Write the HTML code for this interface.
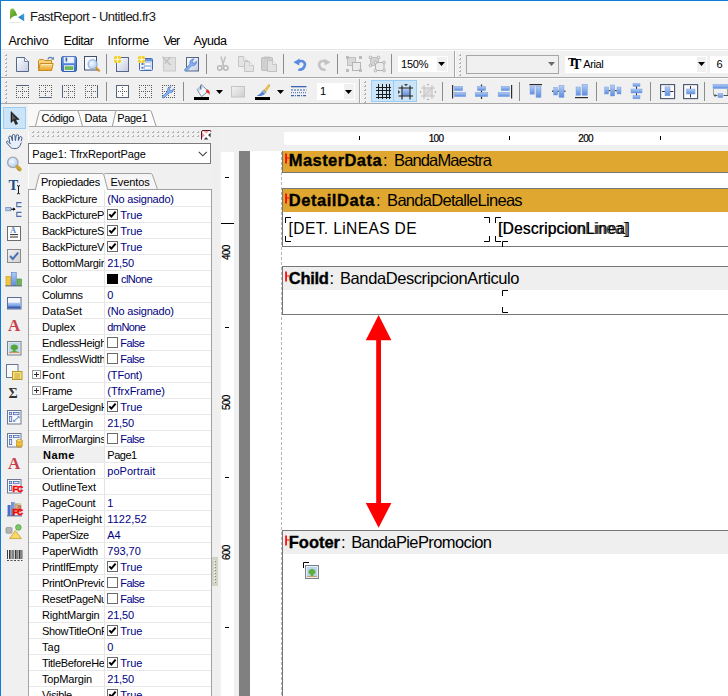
<!DOCTYPE html>
<html lang="es"><head><meta charset="utf-8"><title>FastReport - Untitled.fr3</title>
<style>
html,body{margin:0;padding:0}
body{width:728px;height:696px;overflow:hidden;position:relative;background:#fff;font-family:"Liberation Sans",sans-serif}
.a{position:absolute;box-sizing:border-box}
.t{position:absolute;white-space:pre}
svg{overflow:visible}
</style></head>
<body>
<div class="a" style="left:0px;top:0px;width:728px;height:1px;background:#0f7bd7;"></div><div class="a" style="left:0px;top:0px;width:1px;height:696px;background:#0f7bd7;"></div><svg class="a" style="left:9px;top:8px" width="16" height="16" viewBox="0 0 16 16"><defs><linearGradient id="gleaf" x1="0" y1="0" x2="1" y2="1"><stop offset="0" stop-color="#8cc63c"/><stop offset="1" stop-color="#3f8a1e"/></linearGradient><linearGradient id="gsail" x1="1" y1="0" x2="0" y2="1"><stop offset="0" stop-color="#4aa8ea"/><stop offset="1" stop-color="#1a6cae"/></linearGradient></defs><path d="M1 11.4 L1 2.2 C1.8 0.8 3.4 0.2 4.4 0.7 C6 2.4 7.4 5 8.3 7.5 C6 7.2 3 8.6 1 11.4 Z" fill="url(#gleaf)"/><path d="M15.2 5.2 L15.2 13.3 L9 9.2 Z" fill="url(#gsail)"/><rect x="0.5" y="14" width="11" height="0.7" fill="#dcdcdc"/></svg><span class="t" style="left:30.00px;top:9.50px;font-size:13px;line-height:13px;color:#1a1a1a;letter-spacing:-0.529px;">FastReport - Untitled.fr3</span><span class="t" style="left:8.50px;top:34.62px;font-size:12.5px;line-height:12.5px;color:#000;letter-spacing:-0.241px;">Archivo</span><span class="t" style="left:63.50px;top:34.62px;font-size:12.5px;line-height:12.5px;color:#000;letter-spacing:-0.443px;">Editar</span><span class="t" style="left:107.50px;top:34.62px;font-size:12.5px;line-height:12.5px;color:#000;letter-spacing:-0.127px;">Informe</span><span class="t" style="left:163.50px;top:34.62px;font-size:12.5px;line-height:12.5px;color:#000;letter-spacing:-1.089px;">Ver</span><span class="t" style="left:193.50px;top:34.62px;font-size:12.5px;line-height:12.5px;color:#000;letter-spacing:-0.444px;">Ayuda</span><div class="a" style="left:1px;top:50px;width:727px;height:54px;background:#f0f0f0;"></div><div class="a" style="left:1px;top:49px;width:727px;height:1px;background:#e6e6e6;"></div><div class="a" style="left:1px;top:50px;width:727px;height:1px;background:#fafafa;"></div><div class="a" style="left:1px;top:77px;width:727px;height:1px;background:#a8a8a8;"></div><div class="a" style="left:1px;top:78px;width:727px;height:1px;background:#fafafa;"></div><div class="a" style="left:1px;top:103px;width:727px;height:1px;background:#a8a8a8;"></div><div class="a" style="left:454px;top:51px;width:1px;height:26px;background:#a8a8a8;"></div><div class="a" style="left:455px;top:51px;width:1px;height:26px;background:#fafafa;"></div><div class="a" style="left:359px;top:79px;width:1px;height:24px;background:#a8a8a8;"></div><div class="a" style="left:360px;top:79px;width:1px;height:24px;background:#fafafa;"></div><svg class="a" style="left:5px;top:54px" width="3" height="24" viewBox="0 0 3 24"><rect x="0" y="0" width="2" height="2" fill="#b0b0b0"/><rect x="0" y="0" width="1" height="1" fill="#ffffff"/><rect x="0" y="4" width="2" height="2" fill="#b0b0b0"/><rect x="0" y="4" width="1" height="1" fill="#ffffff"/><rect x="0" y="8" width="2" height="2" fill="#b0b0b0"/><rect x="0" y="8" width="1" height="1" fill="#ffffff"/><rect x="0" y="12" width="2" height="2" fill="#b0b0b0"/><rect x="0" y="12" width="1" height="1" fill="#ffffff"/><rect x="0" y="16" width="2" height="2" fill="#b0b0b0"/><rect x="0" y="16" width="1" height="1" fill="#ffffff"/><rect x="0" y="20" width="2" height="2" fill="#b0b0b0"/><rect x="0" y="20" width="1" height="1" fill="#ffffff"/></svg><svg class="a" style="left:459px;top:54px" width="3" height="24" viewBox="0 0 3 24"><rect x="0" y="0" width="2" height="2" fill="#b0b0b0"/><rect x="0" y="0" width="1" height="1" fill="#ffffff"/><rect x="0" y="4" width="2" height="2" fill="#b0b0b0"/><rect x="0" y="4" width="1" height="1" fill="#ffffff"/><rect x="0" y="8" width="2" height="2" fill="#b0b0b0"/><rect x="0" y="8" width="1" height="1" fill="#ffffff"/><rect x="0" y="12" width="2" height="2" fill="#b0b0b0"/><rect x="0" y="12" width="1" height="1" fill="#ffffff"/><rect x="0" y="16" width="2" height="2" fill="#b0b0b0"/><rect x="0" y="16" width="1" height="1" fill="#ffffff"/><rect x="0" y="20" width="2" height="2" fill="#b0b0b0"/><rect x="0" y="20" width="1" height="1" fill="#ffffff"/></svg><svg class="a" style="left:5px;top:81px" width="3" height="24" viewBox="0 0 3 24"><rect x="0" y="0" width="2" height="2" fill="#b0b0b0"/><rect x="0" y="0" width="1" height="1" fill="#ffffff"/><rect x="0" y="4" width="2" height="2" fill="#b0b0b0"/><rect x="0" y="4" width="1" height="1" fill="#ffffff"/><rect x="0" y="8" width="2" height="2" fill="#b0b0b0"/><rect x="0" y="8" width="1" height="1" fill="#ffffff"/><rect x="0" y="12" width="2" height="2" fill="#b0b0b0"/><rect x="0" y="12" width="1" height="1" fill="#ffffff"/><rect x="0" y="16" width="2" height="2" fill="#b0b0b0"/><rect x="0" y="16" width="1" height="1" fill="#ffffff"/><rect x="0" y="20" width="2" height="2" fill="#b0b0b0"/><rect x="0" y="20" width="1" height="1" fill="#ffffff"/></svg><svg class="a" style="left:364px;top:81px" width="3" height="24" viewBox="0 0 3 24"><rect x="0" y="0" width="2" height="2" fill="#b0b0b0"/><rect x="0" y="0" width="1" height="1" fill="#ffffff"/><rect x="0" y="4" width="2" height="2" fill="#b0b0b0"/><rect x="0" y="4" width="1" height="1" fill="#ffffff"/><rect x="0" y="8" width="2" height="2" fill="#b0b0b0"/><rect x="0" y="8" width="1" height="1" fill="#ffffff"/><rect x="0" y="12" width="2" height="2" fill="#b0b0b0"/><rect x="0" y="12" width="1" height="1" fill="#ffffff"/><rect x="0" y="16" width="2" height="2" fill="#b0b0b0"/><rect x="0" y="16" width="1" height="1" fill="#ffffff"/><rect x="0" y="20" width="2" height="2" fill="#b0b0b0"/><rect x="0" y="20" width="1" height="1" fill="#ffffff"/></svg><div class="a" style="left:106px;top:54px;width:1px;height:20px;background:#8c8c8c;"></div><div class="a" style="left:206px;top:54px;width:1px;height:20px;background:#8c8c8c;"></div><div class="a" style="left:283px;top:54px;width:1px;height:20px;background:#8c8c8c;"></div><div class="a" style="left:337px;top:54px;width:1px;height:20px;background:#8c8c8c;"></div><div class="a" style="left:391px;top:54px;width:1px;height:20px;background:#8c8c8c;"></div><div class="a" style="left:106px;top:82px;width:1px;height:19px;background:#8c8c8c;"></div><div class="a" style="left:183px;top:82px;width:1px;height:19px;background:#8c8c8c;"></div><div class="a" style="left:442px;top:82px;width:1px;height:19px;background:#8c8c8c;"></div><div class="a" style="left:519px;top:82px;width:1px;height:19px;background:#8c8c8c;"></div><div class="a" style="left:596px;top:82px;width:1px;height:19px;background:#8c8c8c;"></div><div class="a" style="left:650px;top:82px;width:1px;height:19px;background:#8c8c8c;"></div><div class="a" style="left:704px;top:82px;width:1px;height:19px;background:#8c8c8c;"></div><svg class="a" width="0" height="0" style="left:0;top:0"><defs><linearGradient id="gpage" x1="0" y1="0" x2="1" y2="1"><stop offset="0" stop-color="#ffffff"/><stop offset="1" stop-color="#c3cbe3"/></linearGradient><linearGradient id="gfold" x1="0" y1="0" x2="0" y2="1"><stop offset="0" stop-color="#fbe29c"/><stop offset="1" stop-color="#eaa022"/></linearGradient><linearGradient id="gblue" x1="0" y1="0" x2="0" y2="1"><stop offset="0" stop-color="#b4cdf6"/><stop offset="1" stop-color="#5d8ddc"/></linearGradient><linearGradient id="gblueh" x1="0" y1="0" x2="1" y2="0"><stop offset="0" stop-color="#b4cdf6"/><stop offset="1" stop-color="#5d8ddc"/></linearGradient><linearGradient id="ggray" x1="0" y1="0" x2="1" y2="1"><stop offset="0" stop-color="#f2f2f2"/><stop offset="1" stop-color="#cfcfcf"/></linearGradient><linearGradient id="gdisk" x1="0" y1="0" x2="0" y2="1"><stop offset="0" stop-color="#6c9cec"/><stop offset="1" stop-color="#3c6cc6"/></linearGradient><radialGradient id="glens" cx=".4" cy=".4" r=".7"><stop offset="0" stop-color="#f4faff"/><stop offset="1" stop-color="#a9c9ef"/></radialGradient></defs></svg><svg class="a" style="left:16px;top:57px" width="14" height="16" viewBox="0 0 14 16"><path d="M0.5 0.5 L8.5 0.5 L12.5 4.5 L12.5 14.5 L0.5 14.5 Z" fill="url(#gpage)" stroke="#56688a"/><path d="M8.5 0.5 L8.5 4.5 L12.5 4.5" fill="#eef1f8" stroke="#56688a" stroke-width=".8"/></svg><svg class="a" style="left:38px;top:56px" width="17" height="16" viewBox="0 0 17 16"><path d="M9.8 3.4 C10.6 0.9 13.4 0.7 14.6 2.6" fill="none" stroke="#5a7ab4" stroke-width="1.2"/><path d="M13.2 3.8 L16.2 3.4 L15.4 0.6 Z" fill="#5a7ab4"/><path d="M0.5 14.5 L0.5 4.5 L1.5 3.5 L5.5 3.5 L6.5 4.5 L13.5 4.5 L13.5 14.5 Z" fill="#f7d27a" stroke="#c98a1e"/><path d="M0.6 14.5 L2.2 7.5 L15.2 7.5 L13.5 14.5 Z" fill="url(#gfold)" stroke="#c98a1e"/><path d="M3 8.6 L14 8.6" stroke="#fdeebc" stroke-width=".8"/></svg><svg class="a" style="left:61px;top:56px" width="16" height="16" viewBox="0 0 16 16"><rect x="0.5" y="0.5" width="15" height="15" rx="1.8" fill="url(#gdisk)" stroke="#345cae"/><rect x="3" y="1" width="10" height="6" fill="#eef3fc" stroke="#c6d6f0" stroke-width=".5"/><rect x="4.6" y="1.6" width="1.6" height="4" fill="#3a5ca8"/><rect x="3" y="9.2" width="10" height="5.8" fill="#e4ecf8"/><rect x="4" y="10.8" width="8" height="2.8" fill="#6fbb4e" stroke="#4c9a34" stroke-width=".5"/></svg><svg class="a" style="left:84px;top:56px" width="17" height="17" viewBox="0 0 17 17"><rect x="0.5" y="0.5" width="12" height="13.5" fill="#f6f8fc" stroke="#3f4f70"/><circle cx="8.6" cy="8.2" r="4.5" fill="url(#glens)" stroke="#86aee2" stroke-width="1.1"/><path d="M12.2 11.8 L15 14.6" stroke="#d99a3a" stroke-width="2.4" stroke-linecap="round"/><path d="M12.4 13 L14 14.8" stroke="#a86a1a" stroke-width=".6"/></svg><svg class="a" style="left:114px;top:56px" width="16" height="16" viewBox="0 0 16 16"><rect x="2.5" y="1.5" width="12" height="14" fill="url(#gpage)" stroke="#56688a"/><rect x="0" y="0" width="7" height="7" fill="#f3cf34"/><path d="M3.5 0 L3.5 7 M0 3.5 L7 3.5" stroke="#fdf0a0" stroke-width="1"/><rect x="2.5" y="2.5" width="2" height="2" fill="#fffbe0"/><rect x="0" y="0" width="1" height="1" fill="#fae88a"/><rect x="6" y="0" width="1" height="1" fill="#fae88a"/><rect x="0" y="6" width="1" height="1" fill="#fae88a"/><rect x="6" y="6" width="1" height="1" fill="#fae88a"/></svg><svg class="a" style="left:138px;top:56px" width="16" height="16" viewBox="0 0 16 16"><rect x="1.5" y="2.5" width="13" height="12" rx="1" fill="#f4f7fc" stroke="#3f69b5"/><rect x="2" y="3" width="12" height="2.5" fill="#6b96de"/><rect x="3.5" y="7" width="2" height="2" fill="#4b78c8"/><rect x="6.5" y="6.8" width="6.5" height="2.6" fill="#fff" stroke="#8aa6d6" stroke-width=".6"/><rect x="3.5" y="10.8" width="2" height="2" fill="#4b78c8"/><rect x="6.5" y="10.6" width="6.5" height="2.6" fill="#fff" stroke="#8aa6d6" stroke-width=".6"/><rect x="0" y="0" width="7" height="7" fill="#f3cf34"/><path d="M3.5 0 L3.5 7 M0 3.5 L7 3.5" stroke="#fdf0a0" stroke-width="1"/><rect x="2.5" y="2.5" width="2" height="2" fill="#fffbe0"/><rect x="0" y="0" width="1" height="1" fill="#fae88a"/><rect x="6" y="0" width="1" height="1" fill="#fae88a"/><rect x="0" y="6" width="1" height="1" fill="#fae88a"/><rect x="6" y="6" width="1" height="1" fill="#fae88a"/></svg><svg class="a" style="left:162px;top:56px" width="15" height="16" viewBox="0 0 15 16"><rect x="1.5" y="1.5" width="12" height="13.5" fill="#e0e0e0" stroke="#cacaca"/><path d="M0.5 0.8 L8.5 9 M8.5 1 L2.8 7.5" stroke="#c0c0c0" stroke-width="1.4"/></svg><svg class="a" style="left:184px;top:56px" width="16" height="16" viewBox="0 0 16 16"><rect x="2.5" y="1.5" width="12" height="13.5" fill="url(#gpage)" stroke="#56688a"/><g transform="translate(0,2.4)"><path d="M0.7 11 L6.2 5.6 C5.2 3 7 0.6 10 0.5 L8.2 2.8 L8.8 4.6 L10.6 4.9 L12.4 2.8 C12.8 6 10.2 7.8 7.8 7.2 L2.6 12.4 C1.6 13.4 -0.2 12 0.7 11 Z" fill="#86b0ee" stroke="#4478cc" stroke-width=".7"/></g></svg><svg class="a" style="left:217px;top:56px" width="12" height="16" viewBox="0 0 12 16"><path d="M4 0.5 L6.6 10 M8.4 0.5 L5.4 10" stroke="#c0c0c0" stroke-width="1.5" fill="none"/><circle cx="2.8" cy="12" r="2.2" fill="none" stroke="#b8b8b8" stroke-width="1.5"/><circle cx="8.8" cy="12" r="2.2" fill="none" stroke="#b8b8b8" stroke-width="1.5"/></svg><svg class="a" style="left:238px;top:56px" width="17" height="16" viewBox="0 0 17 16"><path d="M0.5 0.5 L5.5 0.5 L9.5 4.5 L9.5 10.5 L0.5 10.5 Z" fill="#e4e4e4" stroke="#c4c4c4"/><path d="M5.5 0.5 L5.5 4.5 L9.5 4.5" fill="#eef1f8" stroke="#c4c4c4" stroke-width=".8"/><path d="M6.5 5.5 L11.5 5.5 L15.5 9.5 L15.5 15.5 L6.5 15.5 Z" fill="#e4e4e4" stroke="#c4c4c4"/><path d="M11.5 5.5 L11.5 9.5 L15.5 9.5" fill="#eef1f8" stroke="#c4c4c4" stroke-width=".8"/></svg><svg class="a" style="left:261px;top:56px" width="17" height="16" viewBox="0 0 17 16"><rect x="0.5" y="1.5" width="11" height="13" rx="1" fill="#d0d0d0" stroke="#bcbcbc"/><rect x="3" y="0.5" width="6" height="2.5" fill="#c4c4c4"/><path d="M6.5 4.5 L11.5 4.5 L15.5 8.5 L15.5 15.5 L6.5 15.5 Z" fill="#e2e2e2" stroke="#c0c0c0"/><path d="M11.5 4.5 L11.5 8.5 L15.5 8.5" fill="#eef1f8" stroke="#c0c0c0" stroke-width=".8"/></svg><svg class="a" style="left:293px;top:58px" width="14" height="13" viewBox="0 0 14 13"><path d="M5 4.2 C9.5 1.2 13 4.5 11.5 8.2 C10.8 10.2 8.8 11.6 6.4 11.8" fill="none" stroke="#5b8be0" stroke-width="2.6" stroke-linecap="round"/><path d="M0.4 4.2 L6.8 0.6 L6.2 7.6 Z" fill="#5b8be0"/></svg><svg class="a" style="left:317px;top:58px" width="14" height="13" viewBox="0 0 14 13"><path d="M9 4.2 C4.5 1.2 1 4.5 2.5 8.2 C3.2 10.2 5.2 11.6 7.6 11.8" fill="none" stroke="#c4c4c4" stroke-width="2.6" stroke-linecap="round"/><path d="M13.6 4.2 L7.2 0.6 L7.8 7.6 Z" fill="#c4c4c4"/></svg><svg class="a" style="left:346px;top:56px" width="16" height="16" viewBox="0 0 16 16"><rect x="1.5" y="1.5" width="8" height="8" fill="#d8d8d8" stroke="#c0c0c0"/><rect x="6.5" y="6.5" width="8" height="8" fill="#ececec" stroke="#b4b4b4"/><rect x="0" y="0" width="3" height="3" fill="#bcbcbc"/><rect x="13" y="0" width="3" height="3" fill="#bcbcbc"/><rect x="0" y="13" width="3" height="3" fill="#bcbcbc"/><rect x="13" y="13" width="3" height="3" fill="#bcbcbc"/></svg><svg class="a" style="left:369px;top:56px" width="17" height="16" viewBox="0 0 17 16"><rect x="1.5" y="1.5" width="8" height="8" fill="#d4d4d4" stroke="#c0c0c0"/><rect x="6.5" y="6.5" width="8.5" height="8" fill="#ececec" stroke="#b4b4b4"/><circle cx="1.5" cy="1.5" r="1.4" fill="#e8e8e8" stroke="#a8a8a8" stroke-width=".8"/><circle cx="9.5" cy="1.5" r="1.4" fill="#e8e8e8" stroke="#a8a8a8" stroke-width=".8"/><circle cx="1.5" cy="9.5" r="1.4" fill="#e8e8e8" stroke="#a8a8a8" stroke-width=".8"/><circle cx="6.5" cy="6.5" r="1.4" fill="#e8e8e8" stroke="#a8a8a8" stroke-width=".8"/><circle cx="15" cy="6.5" r="1.4" fill="#e8e8e8" stroke="#a8a8a8" stroke-width=".8"/><circle cx="6.5" cy="14.5" r="1.4" fill="#e8e8e8" stroke="#a8a8a8" stroke-width=".8"/><circle cx="15" cy="14.5" r="1.4" fill="#e8e8e8" stroke="#a8a8a8" stroke-width=".8"/></svg><div class="a" style="left:398px;top:56px;width:50px;height:16px;background:#fff;"></div><div class="a" style="left:436px;top:56px;width:12px;height:16px;background:#f0f0f0;border:1px solid #fff;"></div><svg class="a" style="left:438.0px;top:62px" width="7" height="4" viewBox="0 0 7 4"><path d="M0 0 L7 0 L3.5 4 Z" fill="#000"/></svg><span class="t" style="left:401.00px;top:59.29px;font-size:11px;line-height:11px;color:#000;letter-spacing:-0.210px;">150%</span><div class="a" style="left:466px;top:55px;width:93px;height:19px;background:#f0f0f0;border:1px solid #a6a6a6;"></div><svg class="a" style="left:548.0px;top:62px" width="7" height="4" viewBox="0 0 7 4"><path d="M0 0 L7 0 L3.5 4 Z" fill="#6a6a6a"/></svg><div class="a" style="left:565px;top:56px;width:142px;height:17px;background:#fff;"></div><div class="a" style="left:696px;top:56px;width:11px;height:17px;background:#f0f0f0;border:1px solid #fff;"></div><svg class="a" style="left:698.0px;top:62px" width="7" height="4" viewBox="0 0 7 4"><path d="M0 0 L7 0 L3.5 4 Z" fill="#000"/></svg><span class="t" style="left:568.00px;top:56.44px;font-size:12px;line-height:12px;color:#000;font-weight:bold;font-family:'Liberation Serif',serif;">T</span><span class="t" style="left:572.00px;top:57.55px;font-size:14px;line-height:14px;color:#000;font-weight:bold;font-family:'Liberation Serif',serif;">T</span><span class="t" style="left:583.30px;top:59.29px;font-size:11px;line-height:11px;color:#000;letter-spacing:-0.403px;">Arial</span><div class="a" style="left:710px;top:56px;width:18px;height:17px;background:#fff;"></div><span class="t" style="left:716.60px;top:59.29px;font-size:11px;line-height:11px;color:#000;">6</span><svg class="a" style="left:16px;top:85px" width="13" height="13" viewBox="0 0 13 13"><rect x="0" y="0" width="1" height="1" fill="#5a5a5a"/><rect x="0" y="2" width="1" height="1" fill="#5a5a5a"/><rect x="0" y="4" width="1" height="1" fill="#5a5a5a"/><rect x="0" y="6" width="1" height="1" fill="#5a5a5a"/><rect x="0" y="8" width="1" height="1" fill="#5a5a5a"/><rect x="0" y="10" width="1" height="1" fill="#5a5a5a"/><rect x="0" y="12" width="1" height="1" fill="#5a5a5a"/><rect x="2" y="0" width="1" height="1" fill="#5a5a5a"/><rect x="2" y="6" width="1" height="1" fill="#5a5a5a"/><rect x="2" y="12" width="1" height="1" fill="#5a5a5a"/><rect x="4" y="0" width="1" height="1" fill="#5a5a5a"/><rect x="4" y="6" width="1" height="1" fill="#5a5a5a"/><rect x="4" y="12" width="1" height="1" fill="#5a5a5a"/><rect x="6" y="0" width="1" height="1" fill="#5a5a5a"/><rect x="6" y="2" width="1" height="1" fill="#5a5a5a"/><rect x="6" y="4" width="1" height="1" fill="#5a5a5a"/><rect x="6" y="6" width="1" height="1" fill="#5a5a5a"/><rect x="6" y="8" width="1" height="1" fill="#5a5a5a"/><rect x="6" y="10" width="1" height="1" fill="#5a5a5a"/><rect x="6" y="12" width="1" height="1" fill="#5a5a5a"/><rect x="8" y="0" width="1" height="1" fill="#5a5a5a"/><rect x="8" y="6" width="1" height="1" fill="#5a5a5a"/><rect x="8" y="12" width="1" height="1" fill="#5a5a5a"/><rect x="10" y="0" width="1" height="1" fill="#5a5a5a"/><rect x="10" y="6" width="1" height="1" fill="#5a5a5a"/><rect x="10" y="12" width="1" height="1" fill="#5a5a5a"/><rect x="12" y="0" width="1" height="1" fill="#5a5a5a"/><rect x="12" y="2" width="1" height="1" fill="#5a5a5a"/><rect x="12" y="4" width="1" height="1" fill="#5a5a5a"/><rect x="12" y="6" width="1" height="1" fill="#5a5a5a"/><rect x="12" y="8" width="1" height="1" fill="#5a5a5a"/><rect x="12" y="10" width="1" height="1" fill="#5a5a5a"/><rect x="12" y="12" width="1" height="1" fill="#5a5a5a"/><rect x="0" y="0" width="13" height="1" fill="#56657d"/></svg><svg class="a" style="left:39px;top:85px" width="13" height="13" viewBox="0 0 13 13"><rect x="0" y="0" width="1" height="1" fill="#5a5a5a"/><rect x="0" y="2" width="1" height="1" fill="#5a5a5a"/><rect x="0" y="4" width="1" height="1" fill="#5a5a5a"/><rect x="0" y="6" width="1" height="1" fill="#5a5a5a"/><rect x="0" y="8" width="1" height="1" fill="#5a5a5a"/><rect x="0" y="10" width="1" height="1" fill="#5a5a5a"/><rect x="0" y="12" width="1" height="1" fill="#5a5a5a"/><rect x="2" y="0" width="1" height="1" fill="#5a5a5a"/><rect x="2" y="6" width="1" height="1" fill="#5a5a5a"/><rect x="2" y="12" width="1" height="1" fill="#5a5a5a"/><rect x="4" y="0" width="1" height="1" fill="#5a5a5a"/><rect x="4" y="6" width="1" height="1" fill="#5a5a5a"/><rect x="4" y="12" width="1" height="1" fill="#5a5a5a"/><rect x="6" y="0" width="1" height="1" fill="#5a5a5a"/><rect x="6" y="2" width="1" height="1" fill="#5a5a5a"/><rect x="6" y="4" width="1" height="1" fill="#5a5a5a"/><rect x="6" y="6" width="1" height="1" fill="#5a5a5a"/><rect x="6" y="8" width="1" height="1" fill="#5a5a5a"/><rect x="6" y="10" width="1" height="1" fill="#5a5a5a"/><rect x="6" y="12" width="1" height="1" fill="#5a5a5a"/><rect x="8" y="0" width="1" height="1" fill="#5a5a5a"/><rect x="8" y="6" width="1" height="1" fill="#5a5a5a"/><rect x="8" y="12" width="1" height="1" fill="#5a5a5a"/><rect x="10" y="0" width="1" height="1" fill="#5a5a5a"/><rect x="10" y="6" width="1" height="1" fill="#5a5a5a"/><rect x="10" y="12" width="1" height="1" fill="#5a5a5a"/><rect x="12" y="0" width="1" height="1" fill="#5a5a5a"/><rect x="12" y="2" width="1" height="1" fill="#5a5a5a"/><rect x="12" y="4" width="1" height="1" fill="#5a5a5a"/><rect x="12" y="6" width="1" height="1" fill="#5a5a5a"/><rect x="12" y="8" width="1" height="1" fill="#5a5a5a"/><rect x="12" y="10" width="1" height="1" fill="#5a5a5a"/><rect x="12" y="12" width="1" height="1" fill="#5a5a5a"/><rect x="0" y="12" width="13" height="1" fill="#56657d"/></svg><svg class="a" style="left:62px;top:85px" width="13" height="13" viewBox="0 0 13 13"><rect x="0" y="0" width="1" height="1" fill="#5a5a5a"/><rect x="0" y="2" width="1" height="1" fill="#5a5a5a"/><rect x="0" y="4" width="1" height="1" fill="#5a5a5a"/><rect x="0" y="6" width="1" height="1" fill="#5a5a5a"/><rect x="0" y="8" width="1" height="1" fill="#5a5a5a"/><rect x="0" y="10" width="1" height="1" fill="#5a5a5a"/><rect x="0" y="12" width="1" height="1" fill="#5a5a5a"/><rect x="2" y="0" width="1" height="1" fill="#5a5a5a"/><rect x="2" y="6" width="1" height="1" fill="#5a5a5a"/><rect x="2" y="12" width="1" height="1" fill="#5a5a5a"/><rect x="4" y="0" width="1" height="1" fill="#5a5a5a"/><rect x="4" y="6" width="1" height="1" fill="#5a5a5a"/><rect x="4" y="12" width="1" height="1" fill="#5a5a5a"/><rect x="6" y="0" width="1" height="1" fill="#5a5a5a"/><rect x="6" y="2" width="1" height="1" fill="#5a5a5a"/><rect x="6" y="4" width="1" height="1" fill="#5a5a5a"/><rect x="6" y="6" width="1" height="1" fill="#5a5a5a"/><rect x="6" y="8" width="1" height="1" fill="#5a5a5a"/><rect x="6" y="10" width="1" height="1" fill="#5a5a5a"/><rect x="6" y="12" width="1" height="1" fill="#5a5a5a"/><rect x="8" y="0" width="1" height="1" fill="#5a5a5a"/><rect x="8" y="6" width="1" height="1" fill="#5a5a5a"/><rect x="8" y="12" width="1" height="1" fill="#5a5a5a"/><rect x="10" y="0" width="1" height="1" fill="#5a5a5a"/><rect x="10" y="6" width="1" height="1" fill="#5a5a5a"/><rect x="10" y="12" width="1" height="1" fill="#5a5a5a"/><rect x="12" y="0" width="1" height="1" fill="#5a5a5a"/><rect x="12" y="2" width="1" height="1" fill="#5a5a5a"/><rect x="12" y="4" width="1" height="1" fill="#5a5a5a"/><rect x="12" y="6" width="1" height="1" fill="#5a5a5a"/><rect x="12" y="8" width="1" height="1" fill="#5a5a5a"/><rect x="12" y="10" width="1" height="1" fill="#5a5a5a"/><rect x="12" y="12" width="1" height="1" fill="#5a5a5a"/><rect x="0" y="0" width="1" height="13" fill="#56657d"/></svg><svg class="a" style="left:85px;top:85px" width="13" height="13" viewBox="0 0 13 13"><rect x="0" y="0" width="1" height="1" fill="#5a5a5a"/><rect x="0" y="2" width="1" height="1" fill="#5a5a5a"/><rect x="0" y="4" width="1" height="1" fill="#5a5a5a"/><rect x="0" y="6" width="1" height="1" fill="#5a5a5a"/><rect x="0" y="8" width="1" height="1" fill="#5a5a5a"/><rect x="0" y="10" width="1" height="1" fill="#5a5a5a"/><rect x="0" y="12" width="1" height="1" fill="#5a5a5a"/><rect x="2" y="0" width="1" height="1" fill="#5a5a5a"/><rect x="2" y="6" width="1" height="1" fill="#5a5a5a"/><rect x="2" y="12" width="1" height="1" fill="#5a5a5a"/><rect x="4" y="0" width="1" height="1" fill="#5a5a5a"/><rect x="4" y="6" width="1" height="1" fill="#5a5a5a"/><rect x="4" y="12" width="1" height="1" fill="#5a5a5a"/><rect x="6" y="0" width="1" height="1" fill="#5a5a5a"/><rect x="6" y="2" width="1" height="1" fill="#5a5a5a"/><rect x="6" y="4" width="1" height="1" fill="#5a5a5a"/><rect x="6" y="6" width="1" height="1" fill="#5a5a5a"/><rect x="6" y="8" width="1" height="1" fill="#5a5a5a"/><rect x="6" y="10" width="1" height="1" fill="#5a5a5a"/><rect x="6" y="12" width="1" height="1" fill="#5a5a5a"/><rect x="8" y="0" width="1" height="1" fill="#5a5a5a"/><rect x="8" y="6" width="1" height="1" fill="#5a5a5a"/><rect x="8" y="12" width="1" height="1" fill="#5a5a5a"/><rect x="10" y="0" width="1" height="1" fill="#5a5a5a"/><rect x="10" y="6" width="1" height="1" fill="#5a5a5a"/><rect x="10" y="12" width="1" height="1" fill="#5a5a5a"/><rect x="12" y="0" width="1" height="1" fill="#5a5a5a"/><rect x="12" y="2" width="1" height="1" fill="#5a5a5a"/><rect x="12" y="4" width="1" height="1" fill="#5a5a5a"/><rect x="12" y="6" width="1" height="1" fill="#5a5a5a"/><rect x="12" y="8" width="1" height="1" fill="#5a5a5a"/><rect x="12" y="10" width="1" height="1" fill="#5a5a5a"/><rect x="12" y="12" width="1" height="1" fill="#5a5a5a"/><rect x="12" y="0" width="1" height="13" fill="#56657d"/></svg><svg class="a" style="left:116px;top:85px" width="13" height="13" viewBox="0 0 13 13"><rect x="0.5" y="0.5" width="12" height="12" fill="#fbfbfb" stroke="#56657d" stroke-width="1"/><rect x="2" y="6" width="1" height="1" fill="#5a5a5a"/><rect x="6" y="2" width="1" height="1" fill="#5a5a5a"/><rect x="4" y="6" width="1" height="1" fill="#5a5a5a"/><rect x="6" y="4" width="1" height="1" fill="#5a5a5a"/><rect x="8" y="6" width="1" height="1" fill="#5a5a5a"/><rect x="6" y="8" width="1" height="1" fill="#5a5a5a"/><rect x="10" y="6" width="1" height="1" fill="#5a5a5a"/><rect x="6" y="10" width="1" height="1" fill="#5a5a5a"/><rect x="6" y="6" width="1" height="1" fill="#5a5a5a"/></svg><svg class="a" style="left:139px;top:85px" width="13" height="13" viewBox="0 0 13 13"><rect x="0" y="0" width="1" height="1" fill="#5a5a5a"/><rect x="0" y="2" width="1" height="1" fill="#5a5a5a"/><rect x="0" y="4" width="1" height="1" fill="#5a5a5a"/><rect x="0" y="6" width="1" height="1" fill="#5a5a5a"/><rect x="0" y="8" width="1" height="1" fill="#5a5a5a"/><rect x="0" y="10" width="1" height="1" fill="#5a5a5a"/><rect x="0" y="12" width="1" height="1" fill="#5a5a5a"/><rect x="2" y="0" width="1" height="1" fill="#5a5a5a"/><rect x="2" y="6" width="1" height="1" fill="#5a5a5a"/><rect x="2" y="12" width="1" height="1" fill="#5a5a5a"/><rect x="4" y="0" width="1" height="1" fill="#5a5a5a"/><rect x="4" y="6" width="1" height="1" fill="#5a5a5a"/><rect x="4" y="12" width="1" height="1" fill="#5a5a5a"/><rect x="6" y="0" width="1" height="1" fill="#5a5a5a"/><rect x="6" y="2" width="1" height="1" fill="#5a5a5a"/><rect x="6" y="4" width="1" height="1" fill="#5a5a5a"/><rect x="6" y="6" width="1" height="1" fill="#5a5a5a"/><rect x="6" y="8" width="1" height="1" fill="#5a5a5a"/><rect x="6" y="10" width="1" height="1" fill="#5a5a5a"/><rect x="6" y="12" width="1" height="1" fill="#5a5a5a"/><rect x="8" y="0" width="1" height="1" fill="#5a5a5a"/><rect x="8" y="6" width="1" height="1" fill="#5a5a5a"/><rect x="8" y="12" width="1" height="1" fill="#5a5a5a"/><rect x="10" y="0" width="1" height="1" fill="#5a5a5a"/><rect x="10" y="6" width="1" height="1" fill="#5a5a5a"/><rect x="10" y="12" width="1" height="1" fill="#5a5a5a"/><rect x="12" y="0" width="1" height="1" fill="#5a5a5a"/><rect x="12" y="2" width="1" height="1" fill="#5a5a5a"/><rect x="12" y="4" width="1" height="1" fill="#5a5a5a"/><rect x="12" y="6" width="1" height="1" fill="#5a5a5a"/><rect x="12" y="8" width="1" height="1" fill="#5a5a5a"/><rect x="12" y="10" width="1" height="1" fill="#5a5a5a"/><rect x="12" y="12" width="1" height="1" fill="#5a5a5a"/></svg><svg class="a" style="left:162px;top:85px" width="13" height="13" viewBox="0 0 13 13"><rect x="0" y="0" width="1" height="1" fill="#5a5a5a"/><rect x="0" y="2" width="1" height="1" fill="#5a5a5a"/><rect x="0" y="4" width="1" height="1" fill="#5a5a5a"/><rect x="0" y="6" width="1" height="1" fill="#5a5a5a"/><rect x="0" y="8" width="1" height="1" fill="#5a5a5a"/><rect x="0" y="10" width="1" height="1" fill="#5a5a5a"/><rect x="0" y="12" width="1" height="1" fill="#5a5a5a"/><rect x="2" y="0" width="1" height="1" fill="#5a5a5a"/><rect x="2" y="6" width="1" height="1" fill="#5a5a5a"/><rect x="2" y="12" width="1" height="1" fill="#5a5a5a"/><rect x="4" y="0" width="1" height="1" fill="#5a5a5a"/><rect x="4" y="6" width="1" height="1" fill="#5a5a5a"/><rect x="4" y="12" width="1" height="1" fill="#5a5a5a"/><rect x="6" y="0" width="1" height="1" fill="#5a5a5a"/><rect x="6" y="2" width="1" height="1" fill="#5a5a5a"/><rect x="6" y="4" width="1" height="1" fill="#5a5a5a"/><rect x="6" y="6" width="1" height="1" fill="#5a5a5a"/><rect x="6" y="8" width="1" height="1" fill="#5a5a5a"/><rect x="6" y="10" width="1" height="1" fill="#5a5a5a"/><rect x="6" y="12" width="1" height="1" fill="#5a5a5a"/><rect x="8" y="0" width="1" height="1" fill="#5a5a5a"/><rect x="8" y="6" width="1" height="1" fill="#5a5a5a"/><rect x="8" y="12" width="1" height="1" fill="#5a5a5a"/><rect x="10" y="0" width="1" height="1" fill="#5a5a5a"/><rect x="10" y="6" width="1" height="1" fill="#5a5a5a"/><rect x="10" y="12" width="1" height="1" fill="#5a5a5a"/><rect x="12" y="0" width="1" height="1" fill="#5a5a5a"/><rect x="12" y="2" width="1" height="1" fill="#5a5a5a"/><rect x="12" y="4" width="1" height="1" fill="#5a5a5a"/><rect x="12" y="6" width="1" height="1" fill="#5a5a5a"/><rect x="12" y="8" width="1" height="1" fill="#5a5a5a"/><rect x="12" y="10" width="1" height="1" fill="#5a5a5a"/><rect x="12" y="12" width="1" height="1" fill="#5a5a5a"/><g transform="translate(0,1.2) scale(.92)"><path d="M0.7 11 L6.2 5.6 C5.2 3 7 0.6 10 0.5 L8.2 2.8 L8.8 4.6 L10.6 4.9 L12.4 2.8 C12.8 6 10.2 7.8 7.8 7.2 L2.6 12.4 C1.6 13.4 -0.2 12 0.7 11 Z" fill="#86b0ee" stroke="#4478cc" stroke-width=".7"/></g></svg><svg class="a" style="left:194px;top:84px" width="16" height="16" viewBox="0 0 16 16"><path d="M3 5.5 L8.2 1 L14 7.4 L7.6 12.6 Z" fill="#f3f7fd" stroke="#6a7f9c" stroke-width=".9"/><path d="M3 5.5 L8.2 1 L9.8 2.8 L4.8 7.4 Z" fill="#b9d0ee"/><path d="M7.4 0.4 C6.4 1.4 6.2 3.6 7 5.4" fill="none" stroke="#48566e" stroke-width=".9"/><path d="M12.6 5.6 C15 5.6 16.2 8 15.6 10.8 C14.6 9 13.6 8.2 12 8.2 Z" fill="#e02626"/><rect x="0" y="13" width="15" height="3" fill="#000"/></svg><svg class="a" style="left:216.0px;top:90px" width="7" height="4" viewBox="0 0 7 4"><path d="M0 0 L7 0 L3.5 4 Z" fill="#000"/></svg><svg class="a" style="left:231px;top:86px" width="14" height="12" viewBox="0 0 14 12"><rect x="0.5" y="0.5" width="13" height="10.5" fill="url(#ggray)" stroke="#c4c4c4"/></svg><svg class="a" style="left:255px;top:84px" width="16" height="16" viewBox="0 0 16 16"><path d="M9 6.4 L13.4 0.8 C14.2 0 15.4 1 14.8 1.9 L10.8 7.8 Z" fill="#f1c451" stroke="#c9962a" stroke-width=".5"/><path d="M8.6 6 L11.2 8.2 L9.6 10 L7 7.6 Z" fill="#9fb4cf" stroke="#6a7f9c" stroke-width=".5"/><path d="M7 7.6 L9.6 10 C7.8 12 4.6 12.4 1.6 11.8 C4 11 5.4 9.6 7 7.6 Z" fill="#4f7fd0"/><rect x="0" y="13" width="15" height="3" fill="#000"/></svg><svg class="a" style="left:277.0px;top:90px" width="7" height="4" viewBox="0 0 7 4"><path d="M0 0 L7 0 L3.5 4 Z" fill="#000"/></svg><svg class="a" style="left:291px;top:86px" width="16" height="11" viewBox="0 0 16 11"><rect x="0" y="0" width="15.5" height="1.3" fill="#3c64b4"/><path d="M0 4 L15.5 4" stroke="#3c64b4" stroke-width="1" stroke-dasharray="2 1"/><path d="M0 6.7 L15.5 6.7" stroke="#3c64b4" stroke-width="1" stroke-dasharray="1 1"/><path d="M0 9.6 L15.5 9.6" stroke="#3c64b4" stroke-width="1.2" stroke-dasharray="3 1 1 1"/></svg><div class="a" style="left:317px;top:83px;width:38px;height:17px;background:#fff;"></div><div class="a" style="left:343px;top:83px;width:12px;height:17px;background:#f0f0f0;border:1px solid #fff;"></div><svg class="a" style="left:345.0px;top:89.5px" width="7" height="4" viewBox="0 0 7 4"><path d="M0 0 L7 0 L3.5 4 Z" fill="#000"/></svg><span class="t" style="left:320.00px;top:86.29px;font-size:11px;line-height:11px;color:#000;">1</span><div class="a" style="left:371px;top:80px;width:23px;height:22px;background:#cce4f7;border:1px solid #99cdf5;"></div><div class="a" style="left:393px;top:80px;width:24px;height:22px;background:#cce4f7;border:1px solid #99cdf5;"></div><svg class="a" style="left:376px;top:84px" width="15" height="15" viewBox="0 0 15 15"><rect x="2" y="0" width="1" height="15" fill="#1c1c1c"/><rect x="6" y="0" width="1" height="15" fill="#1c1c1c"/><rect x="10" y="0" width="1" height="15" fill="#1c1c1c"/><rect x="13" y="0" width="1" height="15" fill="#1c1c1c"/><rect x="0" y="3" width="15" height="1" fill="#1c1c1c"/><rect x="0" y="6" width="15" height="1" fill="#1c1c1c"/><rect x="0" y="10" width="15" height="1" fill="#1c1c1c"/><rect x="0" y="13" width="15" height="1" fill="#1c1c1c"/></svg><svg class="a" style="left:397.5px;top:83.5px" width="16" height="16" viewBox="0 0 16 16"><rect x="4.5" y="4.5" width="7" height="7" fill="url(#gblue)"/><path d="M0.5 4 L15 4 M0.5 12 L15 12 M4 1.5 L4 15.5 M12 1.5 L12 15.5" stroke="#1c1c1c" stroke-width="1.1"/><path d="M6 0 L10 0 L8 2.2 Z" fill="#444"/><path d="M0 6 L0 10 L2.2 8 Z" fill="#444"/></svg><svg class="a" style="left:419.5px;top:83.5px" width="16" height="16" viewBox="0 0 16 16"><rect x="4.5" y="4.5" width="7" height="7" fill="#dcdcdc"/><path d="M4.5 11.5 L11.5 4.5" stroke="#c8c8c8"/><path d="M1 4 L15 4 M1 12 L15 12 M4 1 L4 15 M12 1 L12 15" stroke="#bcbcbc" stroke-width="1"/><path d="M6.5 0 L9.5 0 L8 1.8 Z M6.5 16 L9.5 16 L8 14.2 Z M0 6.5 L0 9.5 L1.8 8 Z M16 6.5 L16 9.5 L14.2 8 Z" fill="#b4b4b4"/></svg><svg class="a" style="left:451px;top:84px" width="17" height="16" viewBox="0 0 17 16"><rect x="1" y="1" width="1.2" height="13.5" fill="#2c2c2c"/><rect x="3.4" y="2.3" width="8.3" height="4.3" fill="url(#gblue)" stroke="#7da2e2" stroke-width=".5"/><rect x="3.4" y="8.3" width="11.4" height="4.3" fill="url(#gblue)" stroke="#7da2e2" stroke-width=".5"/></svg><svg class="a" style="left:474px;top:84px" width="16" height="16" viewBox="0 0 16 16"><rect x="6.9" y="0.5" width="1.2" height="14.5" fill="#2c2c2c"/><rect x="3.4" y="2.3" width="8.3" height="4.3" fill="url(#gblue)" stroke="#7da2e2" stroke-width=".5"/><rect x="1.2" y="8.3" width="12.6" height="4.3" fill="url(#gblue)" stroke="#7da2e2" stroke-width=".5"/></svg><svg class="a" style="left:497px;top:84px" width="16" height="16" viewBox="0 0 16 16"><rect x="4.2" y="2.3" width="8.3" height="4.3" fill="url(#gblue)" stroke="#7da2e2" stroke-width=".5"/><rect x="1.2" y="8.3" width="11.3" height="4.3" fill="url(#gblue)" stroke="#7da2e2" stroke-width=".5"/><rect x="14" y="1" width="1.2" height="13.5" fill="#2c2c2c"/></svg><svg class="a" style="left:529px;top:84px" width="14" height="16" viewBox="0 0 14 16"><rect x="0.4" y="0" width="12.6" height="1.2" fill="#2c2c2c"/><rect x="1" y="2" width="4.3" height="8.2" fill="url(#gblue)" stroke="#7da2e2" stroke-width=".5"/><rect x="7" y="2" width="5" height="11.4" fill="url(#gblue)" stroke="#7da2e2" stroke-width=".5"/></svg><svg class="a" style="left:552px;top:84px" width="14" height="16" viewBox="0 0 14 16"><rect x="0" y="6.6" width="13.5" height="1.2" fill="#2c2c2c"/><rect x="1.7" y="3.4" width="4" height="7.6" fill="url(#gblue)" stroke="#7da2e2" stroke-width=".5"/><rect x="7" y="1.4" width="5" height="12" fill="url(#gblue)" stroke="#7da2e2" stroke-width=".5"/></svg><svg class="a" style="left:575px;top:84px" width="14" height="16" viewBox="0 0 14 16"><rect x="1" y="3" width="4.5" height="8.3" fill="url(#gblue)" stroke="#7da2e2" stroke-width=".5"/><rect x="7" y="0.3" width="5.4" height="11" fill="url(#gblue)" stroke="#7da2e2" stroke-width=".5"/><rect x="0" y="13" width="13" height="1.2" fill="#2c2c2c"/></svg><svg class="a" style="left:604px;top:84px" width="18" height="16" viewBox="0 0 18 16"><rect x="2" y="6.2" width="14" height="1" fill="#2c2c2c"/><rect x="0.6" y="3" width="4" height="7" fill="url(#gblue)" stroke="#7da2e2" stroke-width=".5"/><rect x="6.5" y="1" width="4.2" height="11" fill="url(#gblue)" stroke="#7da2e2" stroke-width=".5"/><rect x="13" y="3" width="4" height="7" fill="url(#gblue)" stroke="#7da2e2" stroke-width=".5"/></svg><svg class="a" style="left:630px;top:83px" width="14" height="17" viewBox="0 0 14 17"><rect x="6" y="2" width="1" height="13" fill="#2c2c2c"/><rect x="3" y="0.4" width="7" height="3" fill="url(#gblue)" stroke="#7da2e2" stroke-width=".5"/><rect x="1" y="6" width="11" height="4" fill="url(#gblue)" stroke="#7da2e2" stroke-width=".5"/><rect x="3" y="12.3" width="7" height="3.5" fill="url(#gblue)" stroke="#7da2e2" stroke-width=".5"/></svg><svg class="a" style="left:660px;top:84px" width="16" height="16" viewBox="0 0 16 16"><rect x="0.6" y="0.6" width="14" height="14" fill="#fafafa" stroke="#48546a" stroke-width="1.1"/><rect x="2" y="7" width="11.4" height="1" fill="#2c2c2c"/><rect x="5" y="2.8" width="5" height="9" fill="url(#gblue)" stroke="#7da2e2" stroke-width=".5"/></svg><svg class="a" style="left:683px;top:84px" width="16" height="16" viewBox="0 0 16 16"><rect x="0.6" y="0.6" width="14" height="14" fill="#fafafa" stroke="#48546a" stroke-width="1.1"/><rect x="7" y="2" width="1" height="11.4" fill="#2c2c2c"/><rect x="3.4" y="5" width="8.6" height="5" fill="url(#gblue)" stroke="#7da2e2" stroke-width=".5"/></svg><svg class="a" style="left:713px;top:84px" width="16" height="16" viewBox="0 0 16 16"><rect x="0" y="0.3" width="15" height="4.2" fill="url(#gblue)" stroke="#7da2e2" stroke-width=".5"/><path d="M0.5 5.5 L0.5 11 M14.5 5.5 L14.5 11" stroke="#555" stroke-dasharray="1 1"/><rect x="5" y="9.3" width="4.8" height="4.2" fill="url(#gblue)" stroke="#7da2e2" stroke-width=".5"/><path d="M1 11.5 L4.5 11.5 M10.5 11.5 L15 11.5" stroke="#555" stroke-width="1"/><path d="M0.5 11.5 L2.5 9.8 L2.5 13.2 Z" fill="#555"/></svg><div class="a" style="left:1px;top:104px;width:727px;height:22px;background:#f8f8f8;"></div><div class="a" style="left:1px;top:126px;width:727px;height:5px;background:#f0f0f0;"></div><div class="a" style="left:1px;top:104px;width:27px;height:592px;background:#f0f0f0;"></div><div class="a" style="left:3px;top:107px;width:23px;height:22px;background:#cce4f7;border:1px solid #99cdf5;"></div><svg class="a" style="left:10px;top:111px" width="10" height="14" viewBox="0 0 10 14"><path d="M1 0.5 L1 11.5 L3.6 9.2 L5.6 13.6 L7.6 12.7 L5.6 8.4 L9.2 8.4 Z" fill="#2a2a2a" stroke="#000" stroke-width=".5"/><path d="M2 3 L2 9.5 L3.8 8 L6 8 Z" fill="#5a5a5a"/></svg><div class="a" style="left:29px;top:126px;width:699px;height:1px;background:#a8a8a8;"></div><svg class="a" style="left:73px;top:110px" width="50" height="16" viewBox="0 0 50 16"><path d="M1.0 16 L2.6 1.8 Q3.0 0.5 4.4 0.5 L43.6 0.5 Q45.0 0.5 45.4 1.8 L47.0 16" fill="#fbfbfb" stroke="#9c9c9c" stroke-width="1"/></svg><svg class="a" style="left:34px;top:110px" width="51" height="16" viewBox="0 0 51 16"><path d="M1.5 16 L5.1 1.8 Q5.5 0.5 6.9 0.5 L42.6 0.5 Q44.0 0.5 44.4 1.8 L48.5 16" fill="#fbfbfb" stroke="#9c9c9c" stroke-width="1"/></svg><svg class="a" style="left:111px;top:110px" width="48" height="16" viewBox="0 0 48 16"><path d="M1.4 16 L4.6 1.8 Q5.0 0.5 6.4 0.5 L38.6 0.5 Q40.0 0.5 40.4 1.8 L45.0 16" fill="#fdfdfd" stroke="#9c9c9c" stroke-width="1"/></svg><div class="a" style="left:113px;top:126px;width:43px;height:1px;background:#fdfdfd;"></div><span class="t" style="left:41.40px;top:113.39px;font-size:11px;line-height:11px;color:#000;letter-spacing:-0.377px;">Código</span><span class="t" style="left:84.50px;top:113.39px;font-size:11px;line-height:11px;color:#000;letter-spacing:-0.188px;">Data</span><span class="t" style="left:117.30px;top:113.39px;font-size:11px;line-height:11px;color:#000;letter-spacing:-0.362px;">Page1</span><svg class="a" style="left:6px;top:134px" width="17" height="15" viewBox="0 0 17 15"><g stroke="#34507e" stroke-width="0.9" fill="#f2f6fd"><rect x="3.4" y="2.0" width="2.7" height="8" rx="1.35" transform="rotate(-14 4.7 6)"/><rect x="6.5" y="0.5" width="2.7" height="8" rx="1.35" transform="rotate(-5 7.8 5)"/><rect x="9.7" y="0.7" width="2.7" height="8" rx="1.35" transform="rotate(7 11 5)"/><rect x="12.7" y="2.6" width="2.6" height="7" rx="1.3" transform="rotate(20 14 6)"/></g><path d="M4.6 10.2 L2.3 7.6 C1.2 6.5 -0.2 7.8 0.8 9 L4.4 13.2 C5.4 14.3 7 14.6 9 14.6 C11.4 14.6 13 13.6 14 11.6 L15.6 7.6 L14 6.5 L4 7 Z" fill="#e6eefb"/><path d="M4.6 10.2 L2.3 7.6 C1.2 6.5 -0.2 7.8 0.8 9 L4.4 13.2 C5.4 14.3 7 14.6 9 14.6 C11.4 14.6 13 13.6 14 11.6 L15.3 8.6" fill="none" stroke="#34507e" stroke-width="0.9"/></svg><svg class="a" style="left:6px;top:156px" width="17" height="17" viewBox="0 0 17 17"><circle cx="6.8" cy="6.4" r="5.2" fill="url(#glens)" stroke="#9ca6b6" stroke-width="1.3"/><path d="M11.2 10.8 L13.8 13.4" stroke="#caa43a" stroke-width="4" stroke-linecap="round"/><path d="M11.4 13 L13.2 14.8" stroke="#8a6a1a" stroke-width=".7"/></svg><span class="t" style="left:8.40px;top:177.53px;font-size:14.5px;line-height:14.5px;color:#1f4e8c;font-weight:bold;font-family:'Liberation Serif',serif;">T</span><svg class="a" style="left:16px;top:185px" width="5" height="10" viewBox="0 0 5 10"><path d="M1 0.5 L2.5 1.2 L4 0.5 M2.5 1 L2.5 8.4 M1 9 L2.5 8.3 L4 9" fill="none" stroke="#000" stroke-width=".9"/></svg><svg class="a" style="left:5px;top:202px" width="18" height="16" viewBox="0 0 18 16"><rect x="0.8" y="5.4" width="5" height="3.4" fill="#b8cae6" stroke="#6a86b8" stroke-width=".7"/><path d="M6 7.2 L10 7.2" stroke="#000" stroke-width="1.1"/><path d="M8.2 5.6 L10.6 7.2 L8.2 8.8 Z" fill="#000"/><path d="M16.5 0.6 L11.8 0.6 L11.8 4.6 L16.5 4.6" fill="none" stroke="#4a6ca8" stroke-width="1.1"/><path d="M16.5 10.4 L11.8 10.4 L11.8 14.4 L16.5 14.4" fill="none" stroke="#4a6ca8" stroke-width="1.1"/></svg><svg class="a" style="left:7px;top:226px" width="15" height="15" viewBox="0 0 15 15"><rect x="0.5" y="0.5" width="13" height="14" fill="#fdfdfd" stroke="#6c6c6c"/><path d="M3 11 L11 11 M3 8.6 L11 8.6" stroke="#2c2c2c" stroke-width="1"/></svg><span class="t" style="left:10.20px;top:226.63px;font-size:8px;line-height:8px;color:#5b82c8;font-weight:bold;font-family:'Liberation Serif',serif;">A</span><svg class="a" style="left:7px;top:249px" width="15" height="14" viewBox="0 0 15 14"><rect x="0.5" y="0.5" width="13" height="13" fill="url(#ggray)" stroke="#8a8a8a"/><path d="M3 7 L5.8 10 L11.2 3.6" fill="none" stroke="#4a6fb4" stroke-width="2"/></svg><svg class="a" style="left:5px;top:272px" width="18" height="15" viewBox="0 0 18 15"><rect x="1" y="4.5" width="4.6" height="9" fill="#f2c63a" stroke="#c99a1a" stroke-width=".6"/><rect x="6.4" y="0.5" width="4.8" height="13" fill="url(#gblue)" stroke="#4a78c8" stroke-width=".6"/><rect x="12" y="7" width="4.4" height="6.5" fill="#6fb45a" stroke="#4a8a3a" stroke-width=".6"/><rect x="0.4" y="13.4" width="16.6" height="1" fill="#56657d"/></svg><svg class="a" style="left:7px;top:297px" width="15" height="13" viewBox="0 0 15 13"><rect x="0.5" y="0.5" width="13.5" height="11.5" fill="#f4f6fb" stroke="#5a6e96"/><rect x="1" y="5.6" width="12.5" height="4.4" fill="url(#gblue)"/><rect x="1" y="9.6" width="12.5" height="2" fill="#3a5ca8"/></svg><span class="t" style="left:8.00px;top:317.01px;font-size:17px;line-height:17px;color:#c8404a;font-weight:bold;font-family:'Liberation Serif',serif;">A</span><svg class="a" style="left:7px;top:341px" width="15" height="15" viewBox="0 0 15 15"><rect x="0.5" y="0.5" width="13.5" height="13.5" fill="#e4e8ec" stroke="#7c828c"/><rect x="2" y="2" width="10.5" height="10" fill="#bcd8ee"/><path d="M3.6 6.6 C3.6 2.6 11 2.6 11 6.6 C11 8.6 9 9 8.4 9 L8.4 10 L11.6 11 L11.6 12 L3 12 L3 11 L6.2 10 L6.2 9 C5.6 9 3.6 8.6 3.6 6.6 Z" fill="#57a53a"/><rect x="2" y="11" width="10.5" height="1" fill="#c89a5a"/></svg><svg class="a" style="left:6px;top:364px" width="17" height="16" viewBox="0 0 17 16"><rect x="0.5" y="0.5" width="11.5" height="13" fill="#f8f9fc" stroke="#6a7690"/><rect x="6.5" y="7.5" width="9.5" height="8" fill="#f7e27a" stroke="#b89a2a"/><path d="M8.5 10 L14 10 M8.5 12 L14 12 M8.5 14 L14 14" stroke="#a8862a" stroke-width=".7"/></svg><span class="t" style="left:8.60px;top:387.05px;font-size:14px;line-height:14px;color:#333;font-weight:bold;font-family:'Liberation Serif',serif;">Σ</span><svg class="a" style="left:7px;top:410px" width="15" height="15" viewBox="0 0 15 15"><rect x="0.5" y="0.5" width="13.5" height="13.5" fill="#f8f9fc" stroke="#6e7890"/><rect x="2.5" y="2.5" width="2.2" height="2.2" fill="#e4ecfa" stroke="#4a6cb4" stroke-width=".8"/><rect x="6.4" y="2.5" width="5.6" height="2.2" fill="#e4ecfa" stroke="#4a6cb4" stroke-width=".8"/><rect x="2.5" y="6.4" width="2.2" height="5.2" fill="#e4ecfa" stroke="#4a6cb4" stroke-width=".8"/></svg><svg class="a" style="left:13px;top:416px" width="7" height="6" viewBox="0 0 7 6"><path d="M1.4 4.8 L5.4 1.2" stroke="#4a6cb4" stroke-width="1"/><path d="M0.2 3.6 L0.4 5.8 L2.6 5.6 Z M6.6 2.4 L6.4 0.2 L4.2 0.4 Z" fill="#4a6cb4"/></svg><svg class="a" style="left:7px;top:433px" width="15" height="15" viewBox="0 0 15 15"><rect x="0.5" y="0.5" width="13.5" height="13.5" fill="#f8f9fc" stroke="#6e7890"/><rect x="2.5" y="2.5" width="2.2" height="2.2" fill="#e4ecfa" stroke="#4a6cb4" stroke-width=".8"/><rect x="6.4" y="2.5" width="5.6" height="2.2" fill="#e4ecfa" stroke="#4a6cb4" stroke-width=".8"/><rect x="2.5" y="6.4" width="2.2" height="5.2" fill="#e4ecfa" stroke="#4a6cb4" stroke-width=".8"/></svg><svg class="a" style="left:15.5px;top:439px" width="7" height="9" viewBox="0 0 7 9"><rect x="0.4" y="1.6" width="5.8" height="5.4" fill="#f0c23c" stroke="#b88a1a" stroke-width=".6"/><ellipse cx="3.3" cy="1.7" rx="2.9" ry="1.3" fill="#f8dc7a" stroke="#b88a1a" stroke-width=".6"/><path d="M0.4 7 C0.4 8.6 6.2 8.6 6.2 7" fill="#e0ac2a" stroke="#b88a1a" stroke-width=".6"/></svg><span class="t" style="left:8.00px;top:454.81px;font-size:17px;line-height:17px;color:#c8404a;font-weight:bold;font-family:'Liberation Serif',serif;">A</span><svg class="a" style="left:7px;top:479px" width="15" height="15" viewBox="0 0 15 15"><rect x="0.5" y="0.5" width="13.5" height="13.5" fill="#f8f9fc" stroke="#6e7890"/><rect x="2.5" y="2.5" width="2.2" height="2.2" fill="#e4ecfa" stroke="#4a6cb4" stroke-width=".8"/><rect x="6.4" y="2.5" width="5.6" height="2.2" fill="#e4ecfa" stroke="#4a6cb4" stroke-width=".8"/><rect x="2.5" y="6.4" width="2.2" height="5.2" fill="#e4ecfa" stroke="#4a6cb4" stroke-width=".8"/></svg><span class="t" style="left:12.60px;top:485.20px;font-size:8.5px;line-height:8.5px;color:#ff0000;font-weight:bold;letter-spacing:-0.772px;-webkit-text-stroke:.5px #ff0000;">FC</span><svg class="a" style="left:7px;top:502px" width="16" height="15" viewBox="0 0 16 15"><rect x="0.6" y="3" width="3" height="10.4" fill="#4a6cc8"/><rect x="4.4" y="0.6" width="3" height="12.8" fill="#7c96d6" stroke="#4a6cc8" stroke-width=".5"/><rect x="7.6" y="1" width="6.8" height="9" fill="#d8d0bc"/><rect x="8.2" y="2" width="2.6" height="8" fill="#d8b87a" stroke="#a8885a" stroke-width=".4"/><rect x="11.4" y="3.4" width="2.6" height="6.6" fill="#c87a6a" stroke="#a85a4a" stroke-width=".4"/><rect x="0" y="13.4" width="15" height=".9" fill="#3a4a7a"/></svg><span class="t" style="left:12.60px;top:508.40px;font-size:8.5px;line-height:8.5px;color:#ff0000;font-weight:bold;letter-spacing:-0.772px;-webkit-text-stroke:.5px #ff0000;">FC</span><svg class="a" style="left:5px;top:524px" width="18" height="16" viewBox="0 0 18 16"><rect x="1" y="3.6" width="6" height="5.6" rx="1" fill="#b4b4b4" stroke="#8a8a8a" stroke-width=".7"/><circle cx="13.4" cy="3.4" r="2.8" fill="#7cc86a" stroke="#4a9a3a" stroke-width=".7"/><path d="M10.4 6.6 L16.4 14.6 L4.6 14.6 Z" fill="#f6d868" stroke="#c89a2a" stroke-width=".8"/></svg><svg class="a" style="left:7px;top:549.5px" width="16" height="11" viewBox="0 0 16 11"><rect x="0" y="0" width="1" height="9" fill="#3c3c3c"/><rect x="2" y="0" width="1.6" height="9" fill="#3c3c3c"/><rect x="4.6" y="0" width="1" height="9" fill="#3c3c3c"/><rect x="6.4" y="0" width="0.8" height="9" fill="#3c3c3c"/><rect x="8" y="0" width="1.6" height="9" fill="#3c3c3c"/><rect x="10.4" y="0" width="1" height="9" fill="#3c3c3c"/><rect x="12" y="0" width="1.6" height="9" fill="#3c3c3c"/><rect x="14.4" y="0" width="1" height="9" fill="#3c3c3c"/><path d="M0 10.5 L15.5 10.5" stroke="#4a4a4a" stroke-width="1" stroke-dasharray="2 1.5"/></svg><div class="a" style="left:29px;top:127px;width:183px;height:569px;background:#f0f0f0;"></div><svg class="a" style="left:32px;top:131px" width="170" height="6" viewBox="0 0 170 6"><rect x="0" y="0" width="2" height="2" fill="#b4b4b4"/><rect x="0" y="0" width="1" height="1" fill="#ffffff"/><rect x="0" y="4" width="2" height="2" fill="#b4b4b4"/><rect x="0" y="4" width="1" height="1" fill="#ffffff"/><rect x="5" y="0" width="2" height="2" fill="#b4b4b4"/><rect x="5" y="0" width="1" height="1" fill="#ffffff"/><rect x="5" y="4" width="2" height="2" fill="#b4b4b4"/><rect x="5" y="4" width="1" height="1" fill="#ffffff"/><rect x="10" y="0" width="2" height="2" fill="#b4b4b4"/><rect x="10" y="0" width="1" height="1" fill="#ffffff"/><rect x="10" y="4" width="2" height="2" fill="#b4b4b4"/><rect x="10" y="4" width="1" height="1" fill="#ffffff"/><rect x="15" y="0" width="2" height="2" fill="#b4b4b4"/><rect x="15" y="0" width="1" height="1" fill="#ffffff"/><rect x="15" y="4" width="2" height="2" fill="#b4b4b4"/><rect x="15" y="4" width="1" height="1" fill="#ffffff"/><rect x="20" y="0" width="2" height="2" fill="#b4b4b4"/><rect x="20" y="0" width="1" height="1" fill="#ffffff"/><rect x="20" y="4" width="2" height="2" fill="#b4b4b4"/><rect x="20" y="4" width="1" height="1" fill="#ffffff"/><rect x="25" y="0" width="2" height="2" fill="#b4b4b4"/><rect x="25" y="0" width="1" height="1" fill="#ffffff"/><rect x="25" y="4" width="2" height="2" fill="#b4b4b4"/><rect x="25" y="4" width="1" height="1" fill="#ffffff"/><rect x="30" y="0" width="2" height="2" fill="#b4b4b4"/><rect x="30" y="0" width="1" height="1" fill="#ffffff"/><rect x="30" y="4" width="2" height="2" fill="#b4b4b4"/><rect x="30" y="4" width="1" height="1" fill="#ffffff"/><rect x="35" y="0" width="2" height="2" fill="#b4b4b4"/><rect x="35" y="0" width="1" height="1" fill="#ffffff"/><rect x="35" y="4" width="2" height="2" fill="#b4b4b4"/><rect x="35" y="4" width="1" height="1" fill="#ffffff"/><rect x="40" y="0" width="2" height="2" fill="#b4b4b4"/><rect x="40" y="0" width="1" height="1" fill="#ffffff"/><rect x="40" y="4" width="2" height="2" fill="#b4b4b4"/><rect x="40" y="4" width="1" height="1" fill="#ffffff"/><rect x="45" y="0" width="2" height="2" fill="#b4b4b4"/><rect x="45" y="0" width="1" height="1" fill="#ffffff"/><rect x="45" y="4" width="2" height="2" fill="#b4b4b4"/><rect x="45" y="4" width="1" height="1" fill="#ffffff"/><rect x="50" y="0" width="2" height="2" fill="#b4b4b4"/><rect x="50" y="0" width="1" height="1" fill="#ffffff"/><rect x="50" y="4" width="2" height="2" fill="#b4b4b4"/><rect x="50" y="4" width="1" height="1" fill="#ffffff"/><rect x="55" y="0" width="2" height="2" fill="#b4b4b4"/><rect x="55" y="0" width="1" height="1" fill="#ffffff"/><rect x="55" y="4" width="2" height="2" fill="#b4b4b4"/><rect x="55" y="4" width="1" height="1" fill="#ffffff"/><rect x="60" y="0" width="2" height="2" fill="#b4b4b4"/><rect x="60" y="0" width="1" height="1" fill="#ffffff"/><rect x="60" y="4" width="2" height="2" fill="#b4b4b4"/><rect x="60" y="4" width="1" height="1" fill="#ffffff"/><rect x="65" y="0" width="2" height="2" fill="#b4b4b4"/><rect x="65" y="0" width="1" height="1" fill="#ffffff"/><rect x="65" y="4" width="2" height="2" fill="#b4b4b4"/><rect x="65" y="4" width="1" height="1" fill="#ffffff"/><rect x="70" y="0" width="2" height="2" fill="#b4b4b4"/><rect x="70" y="0" width="1" height="1" fill="#ffffff"/><rect x="70" y="4" width="2" height="2" fill="#b4b4b4"/><rect x="70" y="4" width="1" height="1" fill="#ffffff"/><rect x="75" y="0" width="2" height="2" fill="#b4b4b4"/><rect x="75" y="0" width="1" height="1" fill="#ffffff"/><rect x="75" y="4" width="2" height="2" fill="#b4b4b4"/><rect x="75" y="4" width="1" height="1" fill="#ffffff"/><rect x="80" y="0" width="2" height="2" fill="#b4b4b4"/><rect x="80" y="0" width="1" height="1" fill="#ffffff"/><rect x="80" y="4" width="2" height="2" fill="#b4b4b4"/><rect x="80" y="4" width="1" height="1" fill="#ffffff"/><rect x="85" y="0" width="2" height="2" fill="#b4b4b4"/><rect x="85" y="0" width="1" height="1" fill="#ffffff"/><rect x="85" y="4" width="2" height="2" fill="#b4b4b4"/><rect x="85" y="4" width="1" height="1" fill="#ffffff"/><rect x="90" y="0" width="2" height="2" fill="#b4b4b4"/><rect x="90" y="0" width="1" height="1" fill="#ffffff"/><rect x="90" y="4" width="2" height="2" fill="#b4b4b4"/><rect x="90" y="4" width="1" height="1" fill="#ffffff"/><rect x="95" y="0" width="2" height="2" fill="#b4b4b4"/><rect x="95" y="0" width="1" height="1" fill="#ffffff"/><rect x="95" y="4" width="2" height="2" fill="#b4b4b4"/><rect x="95" y="4" width="1" height="1" fill="#ffffff"/><rect x="100" y="0" width="2" height="2" fill="#b4b4b4"/><rect x="100" y="0" width="1" height="1" fill="#ffffff"/><rect x="100" y="4" width="2" height="2" fill="#b4b4b4"/><rect x="100" y="4" width="1" height="1" fill="#ffffff"/><rect x="105" y="0" width="2" height="2" fill="#b4b4b4"/><rect x="105" y="0" width="1" height="1" fill="#ffffff"/><rect x="105" y="4" width="2" height="2" fill="#b4b4b4"/><rect x="105" y="4" width="1" height="1" fill="#ffffff"/><rect x="110" y="0" width="2" height="2" fill="#b4b4b4"/><rect x="110" y="0" width="1" height="1" fill="#ffffff"/><rect x="110" y="4" width="2" height="2" fill="#b4b4b4"/><rect x="110" y="4" width="1" height="1" fill="#ffffff"/><rect x="115" y="0" width="2" height="2" fill="#b4b4b4"/><rect x="115" y="0" width="1" height="1" fill="#ffffff"/><rect x="115" y="4" width="2" height="2" fill="#b4b4b4"/><rect x="115" y="4" width="1" height="1" fill="#ffffff"/><rect x="120" y="0" width="2" height="2" fill="#b4b4b4"/><rect x="120" y="0" width="1" height="1" fill="#ffffff"/><rect x="120" y="4" width="2" height="2" fill="#b4b4b4"/><rect x="120" y="4" width="1" height="1" fill="#ffffff"/><rect x="125" y="0" width="2" height="2" fill="#b4b4b4"/><rect x="125" y="0" width="1" height="1" fill="#ffffff"/><rect x="125" y="4" width="2" height="2" fill="#b4b4b4"/><rect x="125" y="4" width="1" height="1" fill="#ffffff"/><rect x="130" y="0" width="2" height="2" fill="#b4b4b4"/><rect x="130" y="0" width="1" height="1" fill="#ffffff"/><rect x="130" y="4" width="2" height="2" fill="#b4b4b4"/><rect x="130" y="4" width="1" height="1" fill="#ffffff"/><rect x="135" y="0" width="2" height="2" fill="#b4b4b4"/><rect x="135" y="0" width="1" height="1" fill="#ffffff"/><rect x="135" y="4" width="2" height="2" fill="#b4b4b4"/><rect x="135" y="4" width="1" height="1" fill="#ffffff"/><rect x="140" y="0" width="2" height="2" fill="#b4b4b4"/><rect x="140" y="0" width="1" height="1" fill="#ffffff"/><rect x="140" y="4" width="2" height="2" fill="#b4b4b4"/><rect x="140" y="4" width="1" height="1" fill="#ffffff"/><rect x="145" y="0" width="2" height="2" fill="#b4b4b4"/><rect x="145" y="0" width="1" height="1" fill="#ffffff"/><rect x="145" y="4" width="2" height="2" fill="#b4b4b4"/><rect x="145" y="4" width="1" height="1" fill="#ffffff"/><rect x="150" y="0" width="2" height="2" fill="#b4b4b4"/><rect x="150" y="0" width="1" height="1" fill="#ffffff"/><rect x="150" y="4" width="2" height="2" fill="#b4b4b4"/><rect x="150" y="4" width="1" height="1" fill="#ffffff"/><rect x="155" y="0" width="2" height="2" fill="#b4b4b4"/><rect x="155" y="0" width="1" height="1" fill="#ffffff"/><rect x="155" y="4" width="2" height="2" fill="#b4b4b4"/><rect x="155" y="4" width="1" height="1" fill="#ffffff"/><rect x="160" y="0" width="2" height="2" fill="#b4b4b4"/><rect x="160" y="0" width="1" height="1" fill="#ffffff"/><rect x="160" y="4" width="2" height="2" fill="#b4b4b4"/><rect x="160" y="4" width="1" height="1" fill="#ffffff"/><rect x="165" y="0" width="2" height="2" fill="#b4b4b4"/><rect x="165" y="0" width="1" height="1" fill="#ffffff"/><rect x="165" y="4" width="2" height="2" fill="#b4b4b4"/><rect x="165" y="4" width="1" height="1" fill="#ffffff"/></svg><svg class="a" style="left:201px;top:130px" width="10" height="10" viewBox="0 0 10 10"><path d="M1 1 L9.5 1 L5 5 Z" fill="#f2a2a2"/><path d="M1 1 L1 9.5 L5 5 Z" fill="#ee9494"/><path d="M9.6 2.6 L9.6 7.4 L7 5 Z M2.6 9.6 L7.4 9.6 L5 7 Z" fill="#34343e"/><path d="M1.5 1.5 L9 9 M9 1.5 L1.5 9" stroke="#ffffff" stroke-width="2"/><path d="M0.5 9.6 L0.5 2 Q0.5 0.5 2 0.5 L9 0.5 Q10 0.6 10 1.6" fill="none" stroke="#5a1420" stroke-width="1"/></svg><div class="a" style="left:28px;top:143px;width:183px;height:21px;background:#fff;border:1px solid #7a7a7a;"></div><span class="t" style="left:32.30px;top:149.19px;font-size:11px;line-height:11px;color:#000;letter-spacing:-0.089px;">Page1: TfrxReportPage</span><svg class="a" style="left:198px;top:151px" width="10" height="6" viewBox="0 0 10 6"><path d="M0.8 0.8 L4.8 4.8 L8.8 0.8" fill="none" stroke="#404040" stroke-width="1.1"/></svg><div class="a" style="left:28px;top:189px;width:184px;height:1px;background:#a0a0a0;"></div><svg class="a" style="left:99px;top:173px" width="61" height="16" viewBox="0 0 61 16"><path d="M1.0 16 L4.6 1.8 Q5.0 0.5 6.4 0.5 L51.6 0.5 Q53.0 0.5 53.4 1.8 L58.4 16" fill="#f6f6f6" stroke="#a0a0a0" stroke-width="1"/></svg><svg class="a" style="left:34px;top:173px" width="76" height="17" viewBox="0 0 76 17"><path d="M1.3 17 L5.1 1.8 Q5.5 0.5 6.9 0.5 L68.0 0.5 Q69.4 0.5 69.8 1.8 L73.8 17" fill="#fbfbfb" stroke="#a0a0a0" stroke-width="1"/></svg><span class="t" style="left:41.00px;top:176.99px;font-size:11px;line-height:11px;color:#000;letter-spacing:-0.253px;">Propiedades</span><span class="t" style="left:110.60px;top:176.99px;font-size:11px;line-height:11px;color:#000;letter-spacing:-0.107px;">Eventos</span><div class="a" style="left:28px;top:190px;width:184px;height:506px;background:#fff;border-left:1px solid #a4a4a4;border-right:1px solid #a0a0a0;"></div><div class="a" style="left:104px;top:190px;width:1px;height:506px;background:#e4e4e4;"></div><div class="a" style="left:29px;top:206px;width:182px;height:1px;background:#e8e8e8;"></div><div class="a" style="left:30px;top:190px;width:74px;height:16px;overflow:hidden"><span class="t" style="left:12.00px;top:3.89px;font-size:11px;line-height:11px;color:#000;letter-spacing:-0.337px;">BackPicture</span></div><span class="t" style="left:107.30px;top:193.89px;font-size:11px;line-height:11px;color:#00007f;letter-spacing:-0.200px;">(No asignado)</span><div class="a" style="left:29px;top:222px;width:182px;height:1px;background:#e8e8e8;"></div><div class="a" style="left:30px;top:206px;width:74px;height:16px;overflow:hidden"><span class="t" style="left:12.00px;top:3.89px;font-size:11px;line-height:11px;color:#000;letter-spacing:-0.330px;">BackPicturePrintable</span></div><svg class="a" style="left:107px;top:209px" width="11" height="11" viewBox="0 0 11 11"><rect x="0.5" y="0.5" width="10" height="10" fill="#fff" stroke="#6a6a6a"/><path d="M2.3 5.3 L4.4 7.6 L8.6 2.6" fill="none" stroke="#000" stroke-width="2"/></svg><span class="t" style="left:120.30px;top:209.89px;font-size:11px;line-height:11px;color:#00007f;letter-spacing:-0.055px;">True</span><div class="a" style="left:29px;top:238px;width:182px;height:1px;background:#e8e8e8;"></div><div class="a" style="left:30px;top:222px;width:74px;height:16px;overflow:hidden"><span class="t" style="left:12.00px;top:3.89px;font-size:11px;line-height:11px;color:#000;letter-spacing:-0.330px;">BackPictureStretched</span></div><svg class="a" style="left:107px;top:225px" width="11" height="11" viewBox="0 0 11 11"><rect x="0.5" y="0.5" width="10" height="10" fill="#fff" stroke="#6a6a6a"/><path d="M2.3 5.3 L4.4 7.6 L8.6 2.6" fill="none" stroke="#000" stroke-width="2"/></svg><span class="t" style="left:120.30px;top:225.89px;font-size:11px;line-height:11px;color:#00007f;letter-spacing:-0.055px;">True</span><div class="a" style="left:29px;top:254px;width:182px;height:1px;background:#e8e8e8;"></div><div class="a" style="left:30px;top:238px;width:74px;height:16px;overflow:hidden"><span class="t" style="left:12.00px;top:3.89px;font-size:11px;line-height:11px;color:#000;letter-spacing:-0.330px;">BackPictureVisible</span></div><svg class="a" style="left:107px;top:241px" width="11" height="11" viewBox="0 0 11 11"><rect x="0.5" y="0.5" width="10" height="10" fill="#fff" stroke="#6a6a6a"/><path d="M2.3 5.3 L4.4 7.6 L8.6 2.6" fill="none" stroke="#000" stroke-width="2"/></svg><span class="t" style="left:120.30px;top:241.89px;font-size:11px;line-height:11px;color:#00007f;letter-spacing:-0.055px;">True</span><div class="a" style="left:29px;top:270px;width:182px;height:1px;background:#e8e8e8;"></div><div class="a" style="left:30px;top:254px;width:74px;height:16px;overflow:hidden"><span class="t" style="left:12.00px;top:3.89px;font-size:11px;line-height:11px;color:#000;letter-spacing:-0.330px;">BottomMargin</span></div><span class="t" style="left:107.30px;top:257.89px;font-size:11px;line-height:11px;color:#00007f;letter-spacing:-0.206px;">21,50</span><div class="a" style="left:29px;top:286px;width:182px;height:1px;background:#e8e8e8;"></div><div class="a" style="left:30px;top:270px;width:74px;height:16px;overflow:hidden"><span class="t" style="left:12.00px;top:3.89px;font-size:11px;line-height:11px;color:#000;letter-spacing:-0.259px;">Color</span></div><div class="a" style="left:107px;top:274px;width:11px;height:10px;background:#000;"></div><span class="t" style="left:121.00px;top:273.89px;font-size:11px;line-height:11px;color:#00007f;letter-spacing:-0.542px;">clNone</span><div class="a" style="left:29px;top:302px;width:182px;height:1px;background:#e8e8e8;"></div><div class="a" style="left:30px;top:286px;width:74px;height:16px;overflow:hidden"><span class="t" style="left:12.00px;top:3.89px;font-size:11px;line-height:11px;color:#000;letter-spacing:-0.415px;">Columns</span></div><span class="t" style="left:107.30px;top:289.89px;font-size:11px;line-height:11px;color:#00007f;">0</span><div class="a" style="left:29px;top:318px;width:182px;height:1px;background:#e8e8e8;"></div><div class="a" style="left:30px;top:302px;width:74px;height:16px;overflow:hidden"><span class="t" style="left:12.00px;top:3.89px;font-size:11px;line-height:11px;color:#000;letter-spacing:0.036px;">DataSet</span></div><span class="t" style="left:107.30px;top:305.89px;font-size:11px;line-height:11px;color:#00007f;letter-spacing:-0.200px;">(No asignado)</span><div class="a" style="left:29px;top:334px;width:182px;height:1px;background:#e8e8e8;"></div><div class="a" style="left:30px;top:318px;width:74px;height:16px;overflow:hidden"><span class="t" style="left:12.00px;top:3.89px;font-size:11px;line-height:11px;color:#000;letter-spacing:-0.208px;">Duplex</span></div><span class="t" style="left:107.30px;top:321.89px;font-size:11px;line-height:11px;color:#00007f;letter-spacing:-0.596px;">dmNone</span><div class="a" style="left:29px;top:350px;width:182px;height:1px;background:#e8e8e8;"></div><div class="a" style="left:30px;top:334px;width:74px;height:16px;overflow:hidden"><span class="t" style="left:12.00px;top:3.89px;font-size:11px;line-height:11px;color:#000;letter-spacing:-0.330px;">EndlessHeight</span></div><svg class="a" style="left:107px;top:337px" width="11" height="11" viewBox="0 0 11 11"><rect x="0.5" y="0.5" width="10" height="10" fill="#fff" stroke="#6a6a6a"/></svg><span class="t" style="left:120.30px;top:337.89px;font-size:11px;line-height:11px;color:#00007f;letter-spacing:-0.581px;">False</span><div class="a" style="left:29px;top:366px;width:182px;height:1px;background:#e8e8e8;"></div><div class="a" style="left:30px;top:350px;width:74px;height:16px;overflow:hidden"><span class="t" style="left:12.00px;top:3.89px;font-size:11px;line-height:11px;color:#000;letter-spacing:-0.330px;">EndlessWidth</span></div><svg class="a" style="left:107px;top:353px" width="11" height="11" viewBox="0 0 11 11"><rect x="0.5" y="0.5" width="10" height="10" fill="#fff" stroke="#6a6a6a"/></svg><span class="t" style="left:120.30px;top:353.89px;font-size:11px;line-height:11px;color:#00007f;letter-spacing:-0.581px;">False</span><div class="a" style="left:29px;top:382px;width:182px;height:1px;background:#e8e8e8;"></div><div class="a" style="left:30px;top:366px;width:74px;height:16px;overflow:hidden"><span class="t" style="left:12.00px;top:3.89px;font-size:11px;line-height:11px;color:#000;letter-spacing:0.146px;">Font</span></div><svg class="a" style="left:32px;top:370px" width="9" height="9" viewBox="0 0 9 9"><rect x="0.5" y="0.5" width="8" height="8" fill="#fff" stroke="#9c9c9c"/><path d="M2 4.5 L7 4.5 M4.5 2 L4.5 7" stroke="#303030" stroke-width="1"/></svg><span class="t" style="left:107.30px;top:369.89px;font-size:11px;line-height:11px;color:#00007f;letter-spacing:-0.152px;">(TFont)</span><div class="a" style="left:29px;top:398px;width:182px;height:1px;background:#e8e8e8;"></div><div class="a" style="left:30px;top:382px;width:74px;height:16px;overflow:hidden"><span class="t" style="left:12.00px;top:3.89px;font-size:11px;line-height:11px;color:#000;letter-spacing:-0.356px;">Frame</span></div><svg class="a" style="left:32px;top:386px" width="9" height="9" viewBox="0 0 9 9"><rect x="0.5" y="0.5" width="8" height="8" fill="#fff" stroke="#9c9c9c"/><path d="M2 4.5 L7 4.5 M4.5 2 L4.5 7" stroke="#303030" stroke-width="1"/></svg><span class="t" style="left:107.30px;top:385.89px;font-size:11px;line-height:11px;color:#00007f;letter-spacing:-0.041px;">(TfrxFrame)</span><div class="a" style="left:29px;top:414px;width:182px;height:1px;background:#e8e8e8;"></div><div class="a" style="left:30px;top:398px;width:74px;height:16px;overflow:hidden"><span class="t" style="left:12.00px;top:3.89px;font-size:11px;line-height:11px;color:#000;letter-spacing:-0.330px;">LargeDesignHeight</span></div><svg class="a" style="left:107px;top:401px" width="11" height="11" viewBox="0 0 11 11"><rect x="0.5" y="0.5" width="10" height="10" fill="#fff" stroke="#6a6a6a"/><path d="M2.3 5.3 L4.4 7.6 L8.6 2.6" fill="none" stroke="#000" stroke-width="2"/></svg><span class="t" style="left:120.30px;top:401.89px;font-size:11px;line-height:11px;color:#00007f;letter-spacing:-0.055px;">True</span><div class="a" style="left:29px;top:430px;width:182px;height:1px;background:#e8e8e8;"></div><div class="a" style="left:30px;top:414px;width:74px;height:16px;overflow:hidden"><span class="t" style="left:12.00px;top:3.89px;font-size:11px;line-height:11px;color:#000;letter-spacing:-0.098px;">LeftMargin</span></div><span class="t" style="left:107.30px;top:417.89px;font-size:11px;line-height:11px;color:#00007f;letter-spacing:-0.206px;">21,50</span><div class="a" style="left:29px;top:446px;width:182px;height:1px;background:#e8e8e8;"></div><div class="a" style="left:30px;top:430px;width:74px;height:16px;overflow:hidden"><span class="t" style="left:12.00px;top:3.89px;font-size:11px;line-height:11px;color:#000;letter-spacing:-0.330px;">MirrorMargins</span></div><svg class="a" style="left:107px;top:433px" width="11" height="11" viewBox="0 0 11 11"><rect x="0.5" y="0.5" width="10" height="10" fill="#fff" stroke="#6a6a6a"/></svg><span class="t" style="left:120.30px;top:433.89px;font-size:11px;line-height:11px;color:#00007f;letter-spacing:-0.581px;">False</span><div class="a" style="left:29px;top:462px;width:182px;height:1px;background:#e8e8e8;"></div><div class="a" style="left:29px;top:446px;width:75px;height:16px;background:#f0f0f0;"></div><div class="a" style="left:30px;top:446px;width:74px;height:16px;overflow:hidden"><span class="t" style="left:13.00px;top:3.89px;font-size:11px;line-height:11px;color:#000;font-weight:bold;letter-spacing:0.508px;">Name</span></div><span class="t" style="left:107.30px;top:449.89px;font-size:11px;line-height:11px;color:#000;letter-spacing:-0.483px;">Page1</span><div class="a" style="left:29px;top:478px;width:182px;height:1px;background:#e8e8e8;"></div><div class="a" style="left:30px;top:462px;width:74px;height:16px;overflow:hidden"><span class="t" style="left:12.00px;top:3.89px;font-size:11px;line-height:11px;color:#000;letter-spacing:-0.028px;">Orientation</span></div><span class="t" style="left:107.30px;top:465.89px;font-size:11px;line-height:11px;color:#00007f;letter-spacing:0.030px;">poPortrait</span><div class="a" style="left:29px;top:494px;width:182px;height:1px;background:#e8e8e8;"></div><div class="a" style="left:30px;top:478px;width:74px;height:16px;overflow:hidden"><span class="t" style="left:12.00px;top:3.89px;font-size:11px;line-height:11px;color:#000;letter-spacing:-0.094px;">OutlineText</span></div><div class="a" style="left:29px;top:510px;width:182px;height:1px;background:#e8e8e8;"></div><div class="a" style="left:30px;top:494px;width:74px;height:16px;overflow:hidden"><span class="t" style="left:12.00px;top:3.89px;font-size:11px;line-height:11px;color:#000;letter-spacing:-0.172px;">PageCount</span></div><span class="t" style="left:107.30px;top:497.89px;font-size:11px;line-height:11px;color:#00007f;">1</span><div class="a" style="left:29px;top:526px;width:182px;height:1px;background:#e8e8e8;"></div><div class="a" style="left:30px;top:510px;width:74px;height:16px;overflow:hidden"><span class="t" style="left:12.00px;top:3.89px;font-size:11px;line-height:11px;color:#000;letter-spacing:-0.105px;">PaperHeight</span></div><span class="t" style="left:107.30px;top:513.89px;font-size:11px;line-height:11px;color:#00007f;letter-spacing:0.078px;">1122,52</span><div class="a" style="left:29px;top:542px;width:182px;height:1px;background:#e8e8e8;"></div><div class="a" style="left:30px;top:526px;width:74px;height:16px;overflow:hidden"><span class="t" style="left:12.00px;top:3.89px;font-size:11px;line-height:11px;color:#000;letter-spacing:-0.463px;">PaperSize</span></div><span class="t" style="left:107.30px;top:529.89px;font-size:11px;line-height:11px;color:#00007f;letter-spacing:-0.234px;">A4</span><div class="a" style="left:29px;top:558px;width:182px;height:1px;background:#e8e8e8;"></div><div class="a" style="left:30px;top:542px;width:74px;height:16px;overflow:hidden"><span class="t" style="left:12.00px;top:3.89px;font-size:11px;line-height:11px;color:#000;letter-spacing:-0.148px;">PaperWidth</span></div><span class="t" style="left:107.30px;top:545.89px;font-size:11px;line-height:11px;color:#00007f;letter-spacing:-0.026px;">793,70</span><div class="a" style="left:29px;top:574px;width:182px;height:1px;background:#e8e8e8;"></div><div class="a" style="left:30px;top:558px;width:74px;height:16px;overflow:hidden"><span class="t" style="left:12.00px;top:3.89px;font-size:11px;line-height:11px;color:#000;letter-spacing:-0.330px;">PrintIfEmpty</span></div><svg class="a" style="left:107px;top:561px" width="11" height="11" viewBox="0 0 11 11"><rect x="0.5" y="0.5" width="10" height="10" fill="#fff" stroke="#6a6a6a"/><path d="M2.3 5.3 L4.4 7.6 L8.6 2.6" fill="none" stroke="#000" stroke-width="2"/></svg><span class="t" style="left:120.30px;top:561.89px;font-size:11px;line-height:11px;color:#00007f;letter-spacing:-0.055px;">True</span><div class="a" style="left:29px;top:590px;width:182px;height:1px;background:#e8e8e8;"></div><div class="a" style="left:30px;top:574px;width:74px;height:16px;overflow:hidden"><span class="t" style="left:12.00px;top:3.89px;font-size:11px;line-height:11px;color:#000;letter-spacing:-0.330px;">PrintOnPreviousPage</span></div><svg class="a" style="left:107px;top:577px" width="11" height="11" viewBox="0 0 11 11"><rect x="0.5" y="0.5" width="10" height="10" fill="#fff" stroke="#6a6a6a"/></svg><span class="t" style="left:120.30px;top:577.89px;font-size:11px;line-height:11px;color:#00007f;letter-spacing:-0.581px;">False</span><div class="a" style="left:29px;top:606px;width:182px;height:1px;background:#e8e8e8;"></div><div class="a" style="left:30px;top:590px;width:74px;height:16px;overflow:hidden"><span class="t" style="left:12.00px;top:3.89px;font-size:11px;line-height:11px;color:#000;letter-spacing:-0.330px;">ResetPageNumbers</span></div><svg class="a" style="left:107px;top:593px" width="11" height="11" viewBox="0 0 11 11"><rect x="0.5" y="0.5" width="10" height="10" fill="#fff" stroke="#6a6a6a"/></svg><span class="t" style="left:120.30px;top:593.89px;font-size:11px;line-height:11px;color:#00007f;letter-spacing:-0.581px;">False</span><div class="a" style="left:29px;top:622px;width:182px;height:1px;background:#e8e8e8;"></div><div class="a" style="left:30px;top:606px;width:74px;height:16px;overflow:hidden"><span class="t" style="left:12.00px;top:3.89px;font-size:11px;line-height:11px;color:#000;letter-spacing:-0.156px;">RightMargin</span></div><span class="t" style="left:107.30px;top:609.89px;font-size:11px;line-height:11px;color:#00007f;letter-spacing:-0.206px;">21,50</span><div class="a" style="left:29px;top:638px;width:182px;height:1px;background:#e8e8e8;"></div><div class="a" style="left:30px;top:622px;width:74px;height:16px;overflow:hidden"><span class="t" style="left:12.00px;top:3.89px;font-size:11px;line-height:11px;color:#000;letter-spacing:-0.330px;">ShowTitleOnPreviousPage</span></div><svg class="a" style="left:107px;top:625px" width="11" height="11" viewBox="0 0 11 11"><rect x="0.5" y="0.5" width="10" height="10" fill="#fff" stroke="#6a6a6a"/><path d="M2.3 5.3 L4.4 7.6 L8.6 2.6" fill="none" stroke="#000" stroke-width="2"/></svg><span class="t" style="left:120.30px;top:625.89px;font-size:11px;line-height:11px;color:#00007f;letter-spacing:-0.055px;">True</span><div class="a" style="left:29px;top:654px;width:182px;height:1px;background:#e8e8e8;"></div><div class="a" style="left:30px;top:638px;width:74px;height:16px;overflow:hidden"><span class="t" style="left:12.00px;top:3.89px;font-size:11px;line-height:11px;color:#000;letter-spacing:0.083px;">Tag</span></div><span class="t" style="left:107.30px;top:641.89px;font-size:11px;line-height:11px;color:#00007f;">0</span><div class="a" style="left:29px;top:670px;width:182px;height:1px;background:#e8e8e8;"></div><div class="a" style="left:30px;top:654px;width:74px;height:16px;overflow:hidden"><span class="t" style="left:12.00px;top:3.89px;font-size:11px;line-height:11px;color:#000;letter-spacing:-0.330px;">TitleBeforeHeader</span></div><svg class="a" style="left:107px;top:657px" width="11" height="11" viewBox="0 0 11 11"><rect x="0.5" y="0.5" width="10" height="10" fill="#fff" stroke="#6a6a6a"/><path d="M2.3 5.3 L4.4 7.6 L8.6 2.6" fill="none" stroke="#000" stroke-width="2"/></svg><span class="t" style="left:120.30px;top:657.89px;font-size:11px;line-height:11px;color:#00007f;letter-spacing:-0.055px;">True</span><div class="a" style="left:29px;top:686px;width:182px;height:1px;background:#e8e8e8;"></div><div class="a" style="left:30px;top:670px;width:74px;height:16px;overflow:hidden"><span class="t" style="left:12.00px;top:3.89px;font-size:11px;line-height:11px;color:#000;letter-spacing:-0.151px;">TopMargin</span></div><span class="t" style="left:107.30px;top:673.89px;font-size:11px;line-height:11px;color:#00007f;letter-spacing:-0.206px;">21,50</span><div class="a" style="left:29px;top:702px;width:182px;height:1px;background:#e8e8e8;"></div><div class="a" style="left:30px;top:686px;width:74px;height:16px;overflow:hidden"><span class="t" style="left:12.00px;top:3.89px;font-size:11px;line-height:11px;color:#000;letter-spacing:-0.330px;">Visible</span></div><svg class="a" style="left:107px;top:689px" width="11" height="11" viewBox="0 0 11 11"><rect x="0.5" y="0.5" width="10" height="10" fill="#fff" stroke="#6a6a6a"/><path d="M2.3 5.3 L4.4 7.6 L8.6 2.6" fill="none" stroke="#000" stroke-width="2"/></svg><span class="t" style="left:120.30px;top:689.89px;font-size:11px;line-height:11px;color:#00007f;letter-spacing:-0.055px;">True</span><div class="a" style="left:212px;top:126px;width:516px;height:570px;background:#f0f0f0;"></div><div class="a" style="left:29px;top:126px;width:699px;height:1px;background:#a8a8a8;"></div><div class="a" style="left:212px;top:127px;width:6px;height:569px;background:#efefef;"></div><div class="a" style="left:212px;top:557px;width:6px;height:29px;background:#d4d4c6;"></div><svg class="a" style="left:213px;top:560px" width="4" height="24" viewBox="0 0 4 24"><rect x="1" y="0" width="1" height="1" fill="#fff"/><rect x="2" y="1" width="1" height="1" fill="#8c8c80"/><rect x="1" y="3" width="1" height="1" fill="#fff"/><rect x="2" y="4" width="1" height="1" fill="#8c8c80"/><rect x="1" y="6" width="1" height="1" fill="#fff"/><rect x="2" y="7" width="1" height="1" fill="#8c8c80"/><rect x="1" y="9" width="1" height="1" fill="#fff"/><rect x="2" y="10" width="1" height="1" fill="#8c8c80"/><rect x="1" y="12" width="1" height="1" fill="#fff"/><rect x="2" y="13" width="1" height="1" fill="#8c8c80"/><rect x="1" y="15" width="1" height="1" fill="#fff"/><rect x="2" y="16" width="1" height="1" fill="#8c8c80"/><rect x="1" y="18" width="1" height="1" fill="#fff"/><rect x="2" y="19" width="1" height="1" fill="#8c8c80"/><rect x="1" y="21" width="1" height="1" fill="#fff"/><rect x="2" y="22" width="1" height="1" fill="#8c8c80"/></svg><div class="a" style="left:221px;top:152px;width:13px;height:544px;background:#fff;"></div><div class="a" style="left:284px;top:132px;width:444px;height:14px;background:#fff;"></div><div class="a" style="left:359px;top:136px;width:1px;height:4px;background:#000;"></div><div class="a" style="left:509px;top:136px;width:1px;height:4px;background:#000;"></div><div class="a" style="left:660px;top:136px;width:1px;height:4px;background:#000;"></div><span class="t" style="left:428.70px;top:133.53px;font-size:10px;line-height:10px;color:#000;letter-spacing:-0.696px;-webkit-text-stroke:.2px #000;">100</span><span class="t" style="left:578.30px;top:133.53px;font-size:10px;line-height:10px;color:#000;letter-spacing:-0.696px;-webkit-text-stroke:.2px #000;">200</span><div class="a" style="left:225px;top:177px;width:4px;height:1px;background:#000;"></div><div class="a" style="left:225px;top:327px;width:4px;height:1px;background:#000;"></div><div class="a" style="left:225px;top:477px;width:4px;height:1px;background:#000;"></div><div class="a" style="left:225px;top:627px;width:4px;height:1px;background:#000;"></div><div class="a" style="left:221px;top:223px;width:13px;height:1px;background:#000;"></div><div class="a" style="left:219px;top:245.0px;width:15px;height:15px"><span class="t" style="left:0.00px;top:3.00px;font-size:10px;line-height:10px;color:#000;letter-spacing:-0.696px;transform:rotate(-90deg);transform-origin:7.5px 4.5px;-webkit-text-stroke:.2px #000;">400</span></div><div class="a" style="left:219px;top:395.0px;width:15px;height:15px"><span class="t" style="left:0.00px;top:3.00px;font-size:10px;line-height:10px;color:#000;letter-spacing:-0.696px;transform:rotate(-90deg);transform-origin:7.5px 4.5px;-webkit-text-stroke:.2px #000;">500</span></div><div class="a" style="left:219px;top:545.2px;width:15px;height:15px"><span class="t" style="left:0.00px;top:3.00px;font-size:10px;line-height:10px;color:#000;letter-spacing:-0.696px;transform:rotate(-90deg);transform-origin:7.5px 4.5px;-webkit-text-stroke:.2px #000;">600</span></div><div class="a" style="left:239px;top:151px;width:11px;height:545px;background:#808080;"></div><div class="a" style="left:250px;top:151px;width:478px;height:545px;background:#fff;"></div><svg class="a" style="left:281px;top:151px" width="1" height="545" viewBox="0 0 1 545"><line x1="0.5" y1="1" x2="0.5" y2="545" stroke="#b4b4b4" stroke-width="1" stroke-dasharray="3 2"/></svg><div class="a" style="left:282px;top:148px;width:447px;height:25px;background:#dfa72f;border-top:1px solid #767676;border-left:1px solid #767676;border-bottom:1px solid #767676;"></div><svg class="a" style="left:285px;top:153px" width="6" height="11" viewBox="0 0 6 11"><path d="M0.2 0.5 L1.9 0.5 L1.9 4.4 L4.6 4.4 L4.6 5.6 L1.9 5.6 L1.9 10.4 L0.2 10.4 Z" fill="#ff0000"/></svg><span class="t" style="left:288.80px;top:151.53px;font-size:16.5px;line-height:16.5px;color:#000;font-weight:bold;letter-spacing:0.423px;-webkit-text-stroke:0.35px #000;">MasterData</span><span class="t" style="left:383.10px;top:151.83px;font-size:16.5px;line-height:16.5px;color:#000;">:</span><span class="t" style="left:394.00px;top:151.83px;font-size:16.5px;line-height:16.5px;color:#000;letter-spacing:-0.861px;">BandaMaestra</span><div class="a" style="left:282px;top:188px;width:447px;height:59px;background:#fff;border:1px solid #767676;"></div><div class="a" style="left:282px;top:188px;width:447px;height:24px;background:#dfa72f;border-top:1px solid #767676;border-left:1px solid #767676;"></div><svg class="a" style="left:285px;top:193px" width="6" height="11" viewBox="0 0 6 11"><path d="M0.2 0.5 L1.9 0.5 L1.9 4.4 L4.6 4.4 L4.6 5.6 L1.9 5.6 L1.9 10.4 L0.2 10.4 Z" fill="#ff0000"/></svg><span class="t" style="left:288.80px;top:191.53px;font-size:16.5px;line-height:16.5px;color:#000;font-weight:bold;letter-spacing:0.540px;-webkit-text-stroke:0.35px #000;">DetailData</span><span class="t" style="left:376.00px;top:191.83px;font-size:16.5px;line-height:16.5px;color:#000;">:</span><span class="t" style="left:387.10px;top:191.83px;font-size:16.5px;line-height:16.5px;color:#000;letter-spacing:-0.717px;">BandaDetalleLineas</span><div class="a" style="left:282px;top:266px;width:447px;height:49px;background:#fff;border:1px solid #767676;"></div><div class="a" style="left:282px;top:266px;width:447px;height:24px;background:#efefef;border-top:1px solid #767676;border-left:1px solid #767676;"></div><svg class="a" style="left:285px;top:271px" width="6" height="11" viewBox="0 0 6 11"><path d="M0.2 0.5 L1.9 0.5 L1.9 4.4 L4.6 4.4 L4.6 5.6 L1.9 5.6 L1.9 10.4 L0.2 10.4 Z" fill="#ff0000"/></svg><span class="t" style="left:288.80px;top:269.53px;font-size:16.5px;line-height:16.5px;color:#000;font-weight:bold;letter-spacing:-0.310px;-webkit-text-stroke:0.35px #000;">Child</span><span class="t" style="left:329.60px;top:269.83px;font-size:16.5px;line-height:16.5px;color:#000;">:</span><span class="t" style="left:340.00px;top:269.83px;font-size:16.5px;line-height:16.5px;color:#000;letter-spacing:-0.410px;">BandaDescripcionArticulo</span><div class="a" style="left:282px;top:530px;width:447px;height:171px;background:#fff;border:1px solid #767676;"></div><div class="a" style="left:282px;top:530px;width:447px;height:24px;background:#efefef;border-top:1px solid #767676;border-left:1px solid #767676;"></div><svg class="a" style="left:285px;top:535px" width="6" height="11" viewBox="0 0 6 11"><path d="M0.2 0.5 L1.9 0.5 L1.9 4.4 L4.6 4.4 L4.6 5.6 L1.9 5.6 L1.9 10.4 L0.2 10.4 Z" fill="#ff0000"/></svg><span class="t" style="left:288.80px;top:533.53px;font-size:16.5px;line-height:16.5px;color:#000;font-weight:bold;letter-spacing:-0.024px;-webkit-text-stroke:0.35px #000;">Footer</span><span class="t" style="left:341.10px;top:533.83px;font-size:16.5px;line-height:16.5px;color:#000;">:</span><span class="t" style="left:351.20px;top:533.83px;font-size:16.5px;line-height:16.5px;color:#000;letter-spacing:-0.602px;">BandaPiePromocion</span><div class="a" style="left:250px;top:145px;width:478px;height:6px;background:#f0f0f0;"></div><svg class="a" style="left:285px;top:217px" width="6" height="6" viewBox="0 0 6 6"><path d="M0.5 6 L0.5 0.5 L6 0.5" fill="none" stroke="#000" stroke-width="1"/></svg><svg class="a" style="left:285px;top:236px" width="6" height="6" viewBox="0 0 6 6"><path d="M0.5 0 L0.5 5.5 L6 5.5" fill="none" stroke="#000" stroke-width="1"/></svg><svg class="a" style="left:484px;top:217px" width="6" height="6" viewBox="0 0 6 6"><path d="M0 0.5 L5.5 0.5 L5.5 6" fill="none" stroke="#000" stroke-width="1"/></svg><svg class="a" style="left:484px;top:236px" width="6" height="6" viewBox="0 0 6 6"><path d="M0 5.5 L5.5 5.5 L5.5 0" fill="none" stroke="#000" stroke-width="1"/></svg><svg class="a" style="left:495px;top:217px" width="6" height="6" viewBox="0 0 6 6"><path d="M0.5 6 L0.5 0.5 L6 0.5" fill="none" stroke="#000" stroke-width="1"/></svg><svg class="a" style="left:495px;top:236px" width="6" height="6" viewBox="0 0 6 6"><path d="M0.5 0 L0.5 5.5 L6 5.5" fill="none" stroke="#000" stroke-width="1"/></svg><svg class="a" style="left:502px;top:241px" width="6" height="6" viewBox="0 0 6 6"><path d="M0.5 6 L0.5 0.5 L6 0.5" fill="none" stroke="#000" stroke-width="1"/></svg><span class="t" style="left:288.60px;top:220.99px;font-size:15.6px;line-height:15.6px;color:#000;letter-spacing:0.356px;">[DET. LiNEAS DE</span><span class="t" style="left:498.00px;top:220.99px;font-size:15.6px;line-height:15.6px;color:#000;letter-spacing:0.206px;">[DescripcionLinea]</span><span class="t" style="left:498.40px;top:221.39px;font-size:15.6px;line-height:15.6px;color:#000;letter-spacing:0.072px;opacity:.75;">[DescripcionLinea]</span><svg class="a" style="left:502px;top:290px" width="6" height="6" viewBox="0 0 6 6"><path d="M0.5 6 L0.5 0.5 L6 0.5" fill="none" stroke="#000" stroke-width="1"/></svg><svg class="a" style="left:502px;top:307px" width="6" height="6" viewBox="0 0 6 6"><path d="M0.5 0 L0.5 5.5 L6 5.5" fill="none" stroke="#000" stroke-width="1"/></svg><svg class="a" style="left:303px;top:562px" width="6" height="6" viewBox="0 0 6 6"><path d="M0.5 6 L0.5 0.5 L6 0.5" fill="none" stroke="#000" stroke-width="1"/></svg><svg class="a" style="left:305px;top:565px" width="14" height="14" viewBox="0 0 14 14"><rect x="0.5" y="0.5" width="13" height="13" fill="#e9eef3" stroke="#7a7f88"/><rect x="2" y="2" width="10" height="10" fill="#b9d6ee"/><path d="M3.5 7 C3.5 3 10.5 3 10.5 7 C10.5 9 8.5 9.5 8 9.5 L8 10.5 L11.5 11.5 L11.5 12 L2.5 12 L2.5 11.5 L6 10.5 L6 9.5 C5.5 9.5 3.5 9 3.5 7 Z" fill="#5fae3e"/><rect x="2" y="11" width="10" height="1" fill="#c4a26a"/></svg><svg class="a" style="left:360px;top:314px" width="40" height="216" viewBox="0 0 40 216"><path d="M18.6 1 L31.4 26.2 L21 26.2 L21 189 L31.4 189 L18.6 213.8 L5.8 189 L16.2 189 L16.2 26.2 L5.8 26.2 Z" fill="#ff0000"/></svg>
</body></html>
